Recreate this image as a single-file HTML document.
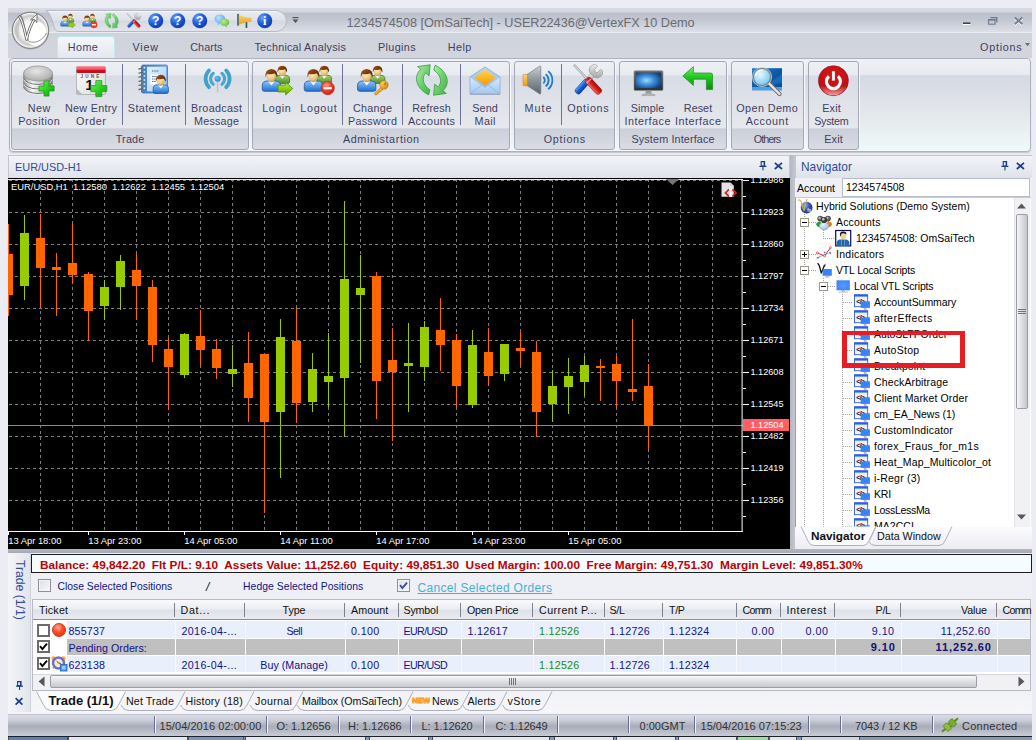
<!DOCTYPE html>
<html>
<head>
<meta charset="utf-8">
<title>VertexFX</title>
<style>
*{box-sizing:border-box;margin:0;padding:0}
html,body{width:1036px;height:740px;overflow:hidden}
body{background:#ececf4;font-family:"Liberation Sans",sans-serif;position:relative;color:#1a1a6a}
.a{position:absolute}
#win{position:absolute;left:0;top:0;width:1036px;height:740px;overflow:hidden}
#title{position:absolute;left:8px;top:8px;width:1024px;height:25px;background:linear-gradient(#d8dbe3 0,#d3d6de 17%,#bac0cb 21%,#c3c7d2 50%,#dddfe7 100%);border-bottom:1px solid #e9ebf0}
#tabs{position:absolute;left:8px;top:33px;width:1024px;height:25px;background:linear-gradient(#cfd3dc,#d2d5de)}
#titletext{position:absolute;left:346.5px;top:14.5px;font-size:12.68px;color:#6b6b72;white-space:nowrap;line-height:16px}
.tab{position:absolute;top:39px;font-size:10.8px;color:#3f3f5f;line-height:16px;white-space:nowrap}
#hometab{position:absolute;left:57px;top:36px;width:58px;height:23px;background:linear-gradient(#f4f6fa,#e4e7ee);border:1px solid #bfe8ee;border-bottom:none;border-radius:4px 4px 0 0}
#ribbon{position:absolute;left:9px;top:58px;width:1022px;height:94px;background:linear-gradient(#eff1f6 0,#e7eaf0 17.5%,#d5d9e3 18%,#dfe2e8 45%,#e8eef0 75%,#effafa 100%);border:1px solid #aeb2be;border-radius:4px;box-shadow:0 1px 1px #c4c7cf}
.grp{position:absolute;top:61px;height:89px;border:1px solid #a4a8b6;border-radius:3px;background:linear-gradient(#eef0f5 0,#e7eaf0 15%,#d8dce5 16%,#e6e8ed 75.5%,#cbcfda 77%,#d9dce4 100%);box-shadow:1px 1px 0 #f8f8fb}
.gcap{position:absolute;left:0;right:0;bottom:2px;text-align:center;font-size:10.8px;color:#3f3f5f;line-height:16px}
.btn{position:absolute;top:102px;text-align:center;font-size:10.8px;line-height:13px;color:#3f3f5f;white-space:nowrap;transform:translateX(-50%)}
.sep{position:absolute;top:64px;width:1px;height:61px;background:#6e7096}
.ico{position:absolute;top:64px;width:32px;height:32px;transform:translateX(-50%)}
.phead{position:absolute;height:24px;background:linear-gradient(#f3f4f8,#dfe2ea);border:1px solid #c3c6d0;font-size:11.4px;color:#2f4a9a;line-height:22px;padding-left:5px;white-space:nowrap}
/* chart */
#chart{position:absolute;left:8px;top:178px;width:782px;height:371px;background:#000;overflow:hidden}
.ct{position:absolute;color:#fff;font-size:9.38px;line-height:11px;white-space:nowrap}
/* navigator */
.tr{position:absolute;font-size:10.5px;line-height:16px;color:#000;white-space:nowrap}
/* bottom */
.bt{position:absolute;font-size:10.7px;line-height:14px;white-space:nowrap;color:#12128a}
.st{position:absolute;top:719px;font-size:11px;line-height:14px;color:#333;white-space:nowrap}
.ssep{position:absolute;top:716px;width:1px;height:17px;background:#6a6c92}
</style>
</head>
<body>
<div id="win">
<div id="title"></div>
<div id="tabs"></div>
<div id="titletext">1234574508 [OmSaiTech] - USER22436@VertexFX 10 Demo</div>
<div id="hometab"></div>
<div class="tab" style="left:67.8px"><span style="letter-spacing:0.397px;margin-right:-0.397px">Home</span></div>
<div class="tab" style="left:132.5px"><span style="letter-spacing:0.762px;margin-right:-0.762px">View</span></div>
<div class="tab" style="left:190.2px"><span style="letter-spacing:0.098px;margin-right:-0.098px">Charts</span></div>
<div class="tab" style="left:254.5px"><span style="letter-spacing:0.215px;margin-right:-0.215px">Technical Analysis</span></div>
<div class="tab" style="left:378.0px"><span style="letter-spacing:0.363px;margin-right:-0.363px">Plugins</span></div>
<div class="tab" style="left:447.8px"><span style="letter-spacing:0.429px;margin-right:-0.429px">Help</span></div>
<div class="tab" style="left:980.1px"><span style="letter-spacing:0.713px;margin-right:-0.713px">Options</span></div>
<div id="ribbon"></div>
<svg class="a" style="left:8px;top:8px" width="300" height="52" viewBox="8 8 300 52"><defs><linearGradient id="qa" x1="0" y1="0" x2="0" y2="1"><stop offset="0" stop-color="#e9ebf1"/><stop offset="0.45" stop-color="#dfe2e9"/><stop offset="0.5" stop-color="#d4d8e0"/><stop offset="1" stop-color="#e2e5eb"/></linearGradient><radialGradient id="ab" cx="0.5" cy="0.5" r="0.5"><stop offset="0" stop-color="#ffffff"/><stop offset="0.55" stop-color="#f2f2f2"/><stop offset="0.8" stop-color="#c9c9c9"/><stop offset="0.93" stop-color="#f4f4f4"/><stop offset="1" stop-color="#9a9a9a"/></radialGradient></defs><path d="M46 10.5 H276 A10.5 10.5 0 0 1 276 31.5 H59 Q55 31.5 53.4 25 Q50.5 12.5 46 10.5 Z" fill="url(#qa)" stroke="#b6bac6" stroke-width="1"/><path d="M48 11.5 H276" stroke="#f4f5f8" stroke-width="1"/><circle cx="30.5" cy="30.8" r="18.8" fill="#8f939e" opacity=".45"/><circle cx="30.5" cy="30.3" r="18.2" fill="url(#ab)" stroke="#777" stroke-width="0.8"/><path d="M14 31 A16.5 16.5 0 0 1 24 15.5 Q17 24 19 38 Q15 36 14 31 Z" fill="#bdbdbd" opacity=".55"/><ellipse cx="36.4" cy="33.7" rx="9.6" ry="12" fill="#fff" transform="rotate(18 36.4 33.7)"/><path d="M21 15 C25 22 24.5 34 29 41.5 C36 44 43 40 46.5 33" fill="none" stroke="#8a8a8a" stroke-width="0.9"/><path d="M19.6 16.8 C22.6 20 24.6 30 26.6 39.4 C28.4 31 31.6 23 35.4 17.6" fill="none" stroke="#5e5e5e" stroke-width="2.7" stroke-linecap="round" stroke-linejoin="round"/><path d="M19.6 16.8 C22.6 20 24.6 30 26.6 39.4 C28.4 31 31.6 23 35.4 17.6" fill="none" stroke="#f8f8f8" stroke-width="1.2" stroke-linecap="round" stroke-linejoin="round"/><path d="M30.6 19.8 L37.2 14 L36.8 22.6 L34.6 19.6 Z" fill="#f0f0f0" stroke="#5e5e5e" stroke-width="0.8" stroke-linejoin="round"/><rect x="292.5" y="17" width="6" height="1.2" fill="#55575f"/><polygon points="292.5,19.5 298.5,19.5 295.5,23" fill="#55575f"/></svg>
<svg class="a" style="left:60.0px;top:13.4px;overflow:visible" width="15.5" height="15.5" viewBox="0 0 32 32"><defs><linearGradient id="qlgb" x1="0" y1="0" x2="0" y2="1"><stop offset="0" stop-color="#a5d36c"/><stop offset="1" stop-color="#4f8f2a"/></linearGradient><radialGradient id="qlgh" cx="0.4" cy="0.35" r="0.8"><stop offset="0" stop-color="#ffedc4"/><stop offset="0.6" stop-color="#eac27f"/><stop offset="1" stop-color="#b98645"/></radialGradient><linearGradient id="qlgr" x1="0" y1="0" x2="1" y2="1"><stop offset="0" stop-color="#a95a1a"/><stop offset="0.55" stop-color="#74350a"/><stop offset="1" stop-color="#4e2205"/></linearGradient><linearGradient id="qlub" x1="0" y1="0" x2="0" y2="1"><stop offset="0" stop-color="#8cc6f7"/><stop offset="1" stop-color="#1f6fd0"/></linearGradient><radialGradient id="qluh" cx="0.4" cy="0.35" r="0.8"><stop offset="0" stop-color="#ffedc4"/><stop offset="0.6" stop-color="#eac27f"/><stop offset="1" stop-color="#b98645"/></radialGradient><linearGradient id="qlur" x1="0" y1="0" x2="1" y2="1"><stop offset="0" stop-color="#a95a1a"/><stop offset="0.55" stop-color="#74350a"/><stop offset="1" stop-color="#4e2205"/></linearGradient></defs><path d="M14.02 14.97 Q14.02 11.27 18.02 11.27 L24.58 11.27 Q28.59 11.27 28.59 14.97 L28.59 17.84 Q28.59 19.49 26.76 19.49 L15.84 19.49 Q14.02 19.49 14.02 17.84 Z" fill="url(#qlgb)" stroke="#3d7a1e" stroke-width="0.8"/><path d="M18.71 11.46 L23.89 11.46 L21.30 14.79 Z" fill="#fff"/><rect x="19.80" y="9.62" width="3.01" height="2.59" fill="#c99a5b"/><ellipse cx="21.30" cy="7.27" rx="3.85" ry="4.46" fill="url(#qlgh)"/><path d="M16.60 8.45 Q15.90 1.86 21.30 1.63 Q26.70 1.86 26.00 8.45 Q25.06 6.33 23.89 5.15 Q20.83 6.56 17.77 5.39 Q17.30 6.80 16.60 8.45 Z" fill="url(#qlgr)"/><path d="M1.25 21.65 Q1.25 17.01 6.28 17.01 L14.52 17.01 Q19.55 17.01 19.55 21.65 L19.55 25.27 Q19.55 27.33 17.26 27.33 L3.54 27.33 Q1.25 27.33 1.25 25.27 Z" fill="url(#qlub)" stroke="#1a55a8" stroke-width="0.8"/><path d="M7.15 17.21 L13.65 17.21 L10.40 21.43 Z" fill="#fff"/><rect x="8.51" y="14.94" width="3.78" height="3.25" fill="#c99a5b"/><ellipse cx="10.40" cy="11.99" rx="4.84" ry="5.61" fill="url(#qluh)"/><path d="M4.50 13.46 Q3.62 5.21 10.40 4.91 Q17.19 5.21 16.30 13.46 Q15.12 10.81 13.65 9.34 Q9.81 11.11 5.97 9.63 Q5.38 11.40 4.50 13.46 Z" fill="url(#qlur)"/><path d="M17 21.2 H24.6 V18.3 L31.8 24.6 L24.6 30.9 V28 H17 Z" fill="#8fcf10" stroke="#5b8e0a" stroke-width="0.8"/></svg>
<svg class="a" style="left:82.0px;top:13.4px;overflow:visible" width="15.5" height="15.5" viewBox="0 0 32 32"><defs><linearGradient id="qogb" x1="0" y1="0" x2="0" y2="1"><stop offset="0" stop-color="#a5d36c"/><stop offset="1" stop-color="#4f8f2a"/></linearGradient><radialGradient id="qogh" cx="0.4" cy="0.35" r="0.8"><stop offset="0" stop-color="#ffedc4"/><stop offset="0.6" stop-color="#eac27f"/><stop offset="1" stop-color="#b98645"/></radialGradient><linearGradient id="qogr" x1="0" y1="0" x2="1" y2="1"><stop offset="0" stop-color="#a95a1a"/><stop offset="0.55" stop-color="#74350a"/><stop offset="1" stop-color="#4e2205"/></linearGradient><linearGradient id="qoub" x1="0" y1="0" x2="0" y2="1"><stop offset="0" stop-color="#8cc6f7"/><stop offset="1" stop-color="#1f6fd0"/></linearGradient><radialGradient id="qouh" cx="0.4" cy="0.35" r="0.8"><stop offset="0" stop-color="#ffedc4"/><stop offset="0.6" stop-color="#eac27f"/><stop offset="1" stop-color="#b98645"/></radialGradient><linearGradient id="qour" x1="0" y1="0" x2="1" y2="1"><stop offset="0" stop-color="#a95a1a"/><stop offset="0.55" stop-color="#74350a"/><stop offset="1" stop-color="#4e2205"/></linearGradient></defs><path d="M14.02 14.97 Q14.02 11.27 18.02 11.27 L24.58 11.27 Q28.59 11.27 28.59 14.97 L28.59 17.84 Q28.59 19.49 26.76 19.49 L15.84 19.49 Q14.02 19.49 14.02 17.84 Z" fill="url(#qogb)" stroke="#3d7a1e" stroke-width="0.8"/><path d="M18.71 11.46 L23.89 11.46 L21.30 14.79 Z" fill="#fff"/><rect x="19.80" y="9.62" width="3.01" height="2.59" fill="#c99a5b"/><ellipse cx="21.30" cy="7.27" rx="3.85" ry="4.46" fill="url(#qogh)"/><path d="M16.60 8.45 Q15.90 1.86 21.30 1.63 Q26.70 1.86 26.00 8.45 Q25.06 6.33 23.89 5.15 Q20.83 6.56 17.77 5.39 Q17.30 6.80 16.60 8.45 Z" fill="url(#qogr)"/><path d="M1.25 21.65 Q1.25 17.01 6.28 17.01 L14.52 17.01 Q19.55 17.01 19.55 21.65 L19.55 25.27 Q19.55 27.33 17.26 27.33 L3.54 27.33 Q1.25 27.33 1.25 25.27 Z" fill="url(#qoub)" stroke="#1a55a8" stroke-width="0.8"/><path d="M7.15 17.21 L13.65 17.21 L10.40 21.43 Z" fill="#fff"/><rect x="8.51" y="14.94" width="3.78" height="3.25" fill="#c99a5b"/><ellipse cx="10.40" cy="11.99" rx="4.84" ry="5.61" fill="url(#qouh)"/><path d="M4.50 13.46 Q3.62 5.21 10.40 4.91 Q17.19 5.21 16.30 13.46 Q15.12 10.81 13.65 9.34 Q9.81 11.11 5.97 9.63 Q5.38 11.40 4.50 13.46 Z" fill="url(#qour)"/><circle cx="24.7" cy="24.1" r="6.8" fill="#ee3b2b" stroke="#b4170e" stroke-width="0.6"/><rect x="20.4" y="22.8" width="8.6" height="2.8" fill="#fff"/></svg>
<svg class="a" style="left:104.2px;top:13.4px;overflow:visible" width="15.5" height="15.5" viewBox="0 0 32.4 32.4"><defs><linearGradient id="qra" x1="0" y1="0" x2="1" y2="1"><stop offset="0" stop-color="#b6ecb0"/><stop offset="0.5" stop-color="#6fd06c"/><stop offset="1" stop-color="#3fae45"/></linearGradient></defs><path d="M13.2 31.2 C3 26 -1.5 13 6.2 5.4 L3.2 2.6 L14.6 0.8 L13.6 12 L10.4 9.2 C6.6 14 8 21.4 14.4 26.2 Z" fill="url(#qra)" stroke="#3da046" stroke-width="0.8" stroke-linejoin="round"/><path d="M19 1.2 C29.2 6.4 33.7 19.4 26 27 L29 29.8 L17.6 31.6 L18.6 20.4 L21.8 23.2 C25.6 18.4 24.2 11 17.8 6.2 Z" fill="url(#qra)" stroke="#3da046" stroke-width="0.8" stroke-linejoin="round"/></svg>
<svg class="a" style="left:126.1px;top:13.4px;overflow:visible" width="15.5" height="15.5" viewBox="0 0 32 32"><defs><linearGradient id="qta" x1="0" y1="0" x2="1" y2="0"><stop offset="0" stop-color="#ff6a6a"/><stop offset="0.5" stop-color="#d91c1c"/><stop offset="1" stop-color="#9c0c0c"/></linearGradient><linearGradient id="qtb" x1="0" y1="0" x2="1" y2="0"><stop offset="0" stop-color="#5aa4ff"/><stop offset="0.5" stop-color="#1560d8"/><stop offset="1" stop-color="#0a3c9c"/></linearGradient><linearGradient id="qtc" x1="0" y1="0" x2="1" y2="1"><stop offset="0" stop-color="#f4f4f4"/><stop offset="1" stop-color="#9a9a9a"/></linearGradient></defs><g transform="rotate(42 16 16)"><rect x="13.6" y="9" width="4.8" height="8" fill="url(#qtc)" stroke="#8a8a8a" stroke-width="0.5"/><path d="M11.2 -0.5 A5.6 5.6 0 0 0 13.4 9.6 L18.6 9.6 A5.6 5.6 0 0 0 20.8 -0.5 L18.2 -0.5 L18.2 4 L16 5.4 L13.8 4 L13.8 -0.5 Z" fill="url(#qtc)" stroke="#8a8a8a" stroke-width="0.5"/><rect x="12.9" y="16" width="6.2" height="17.5" rx="2.6" fill="url(#qtb)" stroke="#0a3c9c" stroke-width="0.5"/></g><g transform="rotate(-43 16 16)"><rect x="15.1" y="-4.5" width="1.9" height="19" fill="#cfcfcf" stroke="#777" stroke-width="0.4"/><rect x="12.6" y="14" width="6.8" height="20" rx="2.8" fill="url(#qta)" stroke="#8c0a0a" stroke-width="0.5"/><rect x="12.8" y="16.5" width="6.4" height="1.6" fill="#f4c0c0" opacity=".7"/></g></svg>
<svg class="a" style="left:147.8px;top:13.4px;overflow:visible" width="15.5" height="15.5" viewBox="0 0 32 32"><defs><radialGradient id="qh1" cx="0.35" cy="0.3" r="0.8"><stop offset="0" stop-color="#6fa4f4"/><stop offset="0.5" stop-color="#1f5cd8"/><stop offset="1" stop-color="#0a36a8"/></radialGradient></defs><circle cx="16" cy="16" r="15.5" fill="url(#qh1)"/><text x="16" y="25" font-family="Liberation Sans" font-weight="bold" font-size="25" text-anchor="middle" fill="#fff">?</text></svg>
<svg class="a" style="left:169.7px;top:13.4px;overflow:visible" width="15.5" height="15.5" viewBox="0 0 32 32"><defs><radialGradient id="qh2" cx="0.35" cy="0.3" r="0.8"><stop offset="0" stop-color="#6fa4f4"/><stop offset="0.5" stop-color="#1f5cd8"/><stop offset="1" stop-color="#0a36a8"/></radialGradient></defs><circle cx="16" cy="16" r="15.5" fill="url(#qh2)"/><text x="16" y="25" font-family="Liberation Sans" font-weight="bold" font-size="25" text-anchor="middle" fill="#fff">?</text></svg>
<svg class="a" style="left:191.8px;top:13.4px;overflow:visible" width="15.5" height="15.5" viewBox="0 0 32 32"><defs><radialGradient id="qh3" cx="0.35" cy="0.3" r="0.8"><stop offset="0" stop-color="#6fa4f4"/><stop offset="0.5" stop-color="#1f5cd8"/><stop offset="1" stop-color="#0a36a8"/></radialGradient></defs><circle cx="16" cy="16" r="15.5" fill="url(#qh3)"/><text x="16" y="25" font-family="Liberation Sans" font-weight="bold" font-size="25" text-anchor="middle" fill="#fff">?</text></svg>
<svg class="a" style="left:213.8px;top:13.4px;overflow:visible" width="15.5" height="15.5" viewBox="0 0 32 32"><defs><radialGradient id="qca" cx="0.4" cy="0.3" r="0.8"><stop offset="0" stop-color="#bfe2ff"/><stop offset="1" stop-color="#3f98e6"/></radialGradient><radialGradient id="qcb" cx="0.4" cy="0.3" r="0.8"><stop offset="0" stop-color="#b6ee8a"/><stop offset="1" stop-color="#4cb828"/></radialGradient></defs><path d="M12 3 C20 3 23 8 23 12 C23 17 18 20.5 12 20.5 L8 26 L8 20 C3 18.5 1 15 1 12 C1 8 4 3 12 3 Z" fill="url(#qca)"/><path d="M22 12 C28 12 31.5 15.5 31.5 19.5 C31.5 22.5 29 25 26 26 L26.5 30 L22.5 26.8 C16 27 12.5 23.5 12.5 19.5 C12.5 15.5 16 12 22 12 Z" fill="url(#qcb)"/></svg>
<svg class="a" style="left:236.8px;top:13.4px;overflow:visible" width="15.5" height="15.5" viewBox="0 0 32 32"><defs><linearGradient id="qha" x1="0" y1="0" x2="0" y2="1"><stop offset="0" stop-color="#fbd86a"/><stop offset="1" stop-color="#e8a020"/></linearGradient></defs><path d="M3 3 L3 25 C10 21 20 19 29 18 C31 16 31 12 29 10 C20 9 10 7 3 3 Z" fill="url(#qha)"/><rect x="0.5" y="1.5" width="3" height="25" rx="1.2" fill="#2a5a5a"/><path d="M19.5 19 V31" stroke="#2a5a5a" stroke-width="3.4"/></svg>
<svg class="a" style="left:257.4px;top:13.4px;overflow:visible" width="15.5" height="15.5" viewBox="0 0 32 32"><defs><radialGradient id="qi" cx="0.35" cy="0.3" r="0.8"><stop offset="0" stop-color="#6fa4f4"/><stop offset="0.5" stop-color="#1f5cd8"/><stop offset="1" stop-color="#0a36a8"/></radialGradient></defs><circle cx="16" cy="16" r="15.5" fill="url(#qi)"/><text x="16" y="25" font-family="Liberation Serif" font-weight="bold" font-size="25" text-anchor="middle" fill="#fff">i</text></svg>
<svg class="a" style="left:955px;top:12px" width="75" height="18" viewBox="955 12 75 18"><rect x="963" y="23.6" width="7.4" height="1.4" fill="#fff"/><rect x="963" y="22.4" width="7.4" height="1.6" fill="#3c4256"/><path d="M990.5 17.6 H996.8 V22.4" fill="none" stroke="#6e7a92" stroke-width="1.3"/><rect x="988.6" y="19.6" width="6.4" height="4.6" fill="none" stroke="#6e7a92" stroke-width="1.1"/><rect x="988.2" y="19.1" width="7.2" height="1.5" fill="#6e7a92"/><path d="M1014.8 17.6 L1022.4 24.2 M1022.4 17.6 L1014.8 24.2" stroke="#fff" stroke-width="2.2" transform="translate(0 0.9)"/><path d="M1014.8 17.6 L1022.4 24.2 M1022.4 17.6 L1014.8 24.2" stroke="#76839b" stroke-width="2"/></svg>
<svg class="a" style="left:1025px;top:43px" width="6" height="4"><polygon points="0,0 5,0 2.5,3.2" fill="#6a6c7a"/></svg>
<div class="grp" style="left:11px;width:238px"><div class="gcap"><span style="letter-spacing:0.172px;margin-right:-0.172px">Trade</span></div></div>
<div class="grp" style="left:252px;width:258px"><div class="gcap"><span style="letter-spacing:0.598px;margin-right:-0.598px">Administartion</span></div></div>
<div class="grp" style="left:514px;width:101px"><div class="gcap"><span style="letter-spacing:0.713px;margin-right:-0.713px">Options</span></div></div>
<div class="grp" style="left:619px;width:108px"><div class="gcap"><span style="letter-spacing:0.138px;margin-right:-0.138px">System Interface</span></div></div>
<div class="grp" style="left:731px;width:73px"><div class="gcap"><span style="letter-spacing:-1.022px;margin-right:1.022px">Others</span></div></div>
<div class="grp" style="left:808px;width:51px"><div class="gcap"><span style="letter-spacing:0.165px;margin-right:-0.165px">Exit</span></div></div>
<div class="btn" style="left:39px"><span style="letter-spacing:0.547px;margin-right:-0.547px">New</span><br><span style="letter-spacing:0.454px;margin-right:-0.454px">Position</span></div>
<div class="ico" style="left:39px"><svg width="32" height="32" viewBox="0 0 32 32" style="display:block;overflow:visible"><defs><linearGradient id="npa" x1="0" y1="0" x2="1" y2="0"><stop offset="0" stop-color="#8e8e8e"/><stop offset="0.3" stop-color="#f4f4f4"/><stop offset="0.7" stop-color="#c4c4c4"/><stop offset="1" stop-color="#7c7c7c"/></linearGradient><radialGradient id="npb" cx="0.45" cy="0.35" r="0.7"><stop offset="0" stop-color="#e6e6e6"/><stop offset="1" stop-color="#a9a9a9"/></radialGradient><linearGradient id="npp" x1="0" y1="0" x2="1" y2="1"><stop offset="0" stop-color="#7df06a"/><stop offset="0.5" stop-color="#2ed321"/><stop offset="1" stop-color="#12981a"/></linearGradient></defs><path d="M0.5 9.5 L0.5 23 A14.5 7 0 0 0 29.5 23 L29.5 9.5 Z" fill="url(#npa)" stroke="#8a8a8a" stroke-width="0.6"/><path d="M0.8 14.5 A14.3 6.8 0 0 0 29.2 14.5" fill="none" stroke="#6e6e6e" stroke-width="1"/><path d="M0.8 15.5 A14.3 6.8 0 0 0 29.2 15.5" fill="none" stroke="#fff" stroke-width="0.8" opacity=".8"/><path d="M0.8 19 A14.3 6.8 0 0 0 29.2 19" fill="none" stroke="#6e6e6e" stroke-width="1"/><path d="M0.8 20 A14.3 6.8 0 0 0 29.2 20" fill="none" stroke="#fff" stroke-width="0.8" opacity=".8"/><path d="M0.8 23.5 A14.3 6.8 0 0 0 29.2 23.5" fill="none" stroke="#6e6e6e" stroke-width="1"/><path d="M0.8 24.5 A14.3 6.8 0 0 0 29.2 24.5" fill="none" stroke="#fff" stroke-width="0.8" opacity=".8"/><ellipse cx="15" cy="9.5" rx="14.5" ry="7.6" fill="url(#npb)" stroke="#8e8e8e" stroke-width="0.7"/><polygon points="21.00,16.90 26.00,16.90 26.00,22.00 31.10,22.00 31.10,27.00 26.00,27.00 26.00,32.10 21.00,32.10 21.00,27.00 15.90,27.00 15.90,22.00 21.00,22.00" fill="url(#npp)" stroke="#1e8f1e" stroke-width="0.7"/></svg></div>
<div class="btn" style="left:91px"><span style="letter-spacing:0.261px;margin-right:-0.261px">New Entry</span><br><span style="letter-spacing:0.548px;margin-right:-0.548px">Order</span></div>
<div class="ico" style="left:91px"><svg width="32" height="32" viewBox="0 0 32 32" style="display:block;overflow:visible"><defs><linearGradient id="nea" x1="0" y1="0" x2="0" y2="1"><stop offset="0" stop-color="#ff8a98"/><stop offset="0.5" stop-color="#f0455a"/><stop offset="0.55" stop-color="#d0101e"/><stop offset="1" stop-color="#c40a18"/></linearGradient><linearGradient id="neb" x1="0" y1="0" x2="1" y2="1"><stop offset="0" stop-color="#ffffff"/><stop offset="1" stop-color="#d9d9d9"/></linearGradient><linearGradient id="nep" x1="0" y1="0" x2="1" y2="1"><stop offset="0" stop-color="#7df06a"/><stop offset="0.5" stop-color="#2ed321"/><stop offset="1" stop-color="#12981a"/></linearGradient></defs><rect x="1.5" y="2.5" width="29" height="28" rx="1.5" fill="url(#neb)" stroke="#a8a8a8" stroke-width="0.8"/><rect x="1.5" y="2.2" width="29" height="6.8" rx="1" fill="url(#nea)"/><text x="16" y="14.2" font-family="Liberation Sans" font-weight="bold" font-size="4.6" text-anchor="middle" fill="#555" letter-spacing="2.2">JUNE</text><text x="14.5" y="26" font-family="Liberation Sans" font-weight="bold" font-size="15" text-anchor="middle" fill="#111">1</text><path d="M2 25 L7 30 L2 30 Z" fill="#bbb"/><polygon points="20.80,16.60 26.80,16.60 26.80,21.60 31.80,21.60 31.80,27.60 26.80,27.60 26.80,32.60 20.80,32.60 20.80,27.60 15.80,27.60 15.80,21.60 20.80,21.60" fill="url(#nep)" stroke="#1e8f1e" stroke-width="0.7"/></svg></div>
<div class="btn" style="left:154px"><span style="letter-spacing:0.384px;margin-right:-0.384px">Statement</span></div>
<div class="ico" style="left:154px"><svg width="32" height="32" viewBox="0 0 32 32" style="display:block;overflow:visible"><defs><linearGradient id="sta" x1="0" y1="0" x2="1" y2="0"><stop offset="0" stop-color="#3f7fc4"/><stop offset="1" stop-color="#7db4ea"/></linearGradient><linearGradient id="stb" x1="0" y1="0" x2="1" y2="1"><stop offset="0" stop-color="#e4f1ff"/><stop offset="1" stop-color="#a9cdf4"/></linearGradient><linearGradient id="stub" x1="0" y1="0" x2="0" y2="1"><stop offset="0" stop-color="#8cc6f7"/><stop offset="1" stop-color="#1f6fd0"/></linearGradient><radialGradient id="stuh" cx="0.4" cy="0.35" r="0.8"><stop offset="0" stop-color="#ffedc4"/><stop offset="0.6" stop-color="#eac27f"/><stop offset="1" stop-color="#b98645"/></radialGradient><linearGradient id="stur" x1="0" y1="0" x2="1" y2="1"><stop offset="0" stop-color="#a95a1a"/><stop offset="0.55" stop-color="#74350a"/><stop offset="1" stop-color="#4e2205"/></linearGradient></defs><rect x="3.5" y="1" width="26" height="28" rx="1.5" fill="url(#sta)" stroke="#2f68a8" stroke-width="0.7"/><rect x="9" y="2.8" width="19" height="24.5" fill="url(#stb)"/><rect x="12.5" y="10.5" width="9" height="10" fill="#fff"/><path d="M14 7h7M14 12.5h5M14 15h4M14 17.5h4" stroke="#3a5a8a" stroke-width="0.9" stroke-dasharray="1.5 0.7"/><path d="M1 5.0 L6 3.7" stroke="#6a6a6a" stroke-width="1.3" stroke-linecap="round"/><circle cx="6.3" cy="3.7" r="0.9" fill="#dfefff"/><path d="M1 9.1 L6 7.8" stroke="#6a6a6a" stroke-width="1.3" stroke-linecap="round"/><circle cx="6.3" cy="7.8" r="0.9" fill="#dfefff"/><path d="M1 13.2 L6 11.9" stroke="#6a6a6a" stroke-width="1.3" stroke-linecap="round"/><circle cx="6.3" cy="11.9" r="0.9" fill="#dfefff"/><path d="M1 17.3 L6 16.0" stroke="#6a6a6a" stroke-width="1.3" stroke-linecap="round"/><circle cx="6.3" cy="16.0" r="0.9" fill="#dfefff"/><path d="M1 21.4 L6 20.1" stroke="#6a6a6a" stroke-width="1.3" stroke-linecap="round"/><circle cx="6.3" cy="20.1" r="0.9" fill="#dfefff"/><path d="M1 25.5 L6 24.2" stroke="#6a6a6a" stroke-width="1.3" stroke-linecap="round"/><circle cx="6.3" cy="24.2" r="0.9" fill="#dfefff"/><path d="M15.21 24.71 Q15.21 20.86 19.38 20.86 L26.22 20.86 Q30.40 20.86 30.40 24.71 L30.40 27.72 Q30.40 29.43 28.50 29.43 L17.10 29.43 Q15.21 29.43 15.21 27.72 Z" fill="url(#stub)" stroke="#1a55a8" stroke-width="0.8"/><path d="M20.11 21.05 L25.50 21.05 L22.80 24.53 Z" fill="#fff"/><rect x="21.23" y="19.14" width="3.14" height="2.70" fill="#c99a5b"/><ellipse cx="22.80" cy="16.69" rx="4.02" ry="4.66" fill="url(#stuh)"/><path d="M17.90 17.91 Q17.16 11.05 22.80 10.81 Q28.44 11.05 27.70 17.91 Q26.72 15.71 25.50 14.48 Q22.31 15.96 19.12 14.73 Q18.64 16.20 17.90 17.91 Z" fill="url(#stur)"/></svg></div>
<div class="btn" style="left:216.5px"><span style="letter-spacing:0.309px;margin-right:-0.309px">Broadcast</span><br><span style="letter-spacing:0.163px;margin-right:-0.163px">Message</span></div>
<div class="ico" style="left:216.5px"><svg width="32" height="32" viewBox="0 0 32 32" style="display:block;overflow:visible"><defs><radialGradient id="bca" cx="0.4" cy="0.35" r="0.7"><stop offset="0" stop-color="#6cc6f5"/><stop offset="1" stop-color="#1f88cf"/></radialGradient></defs><path d="M16.6 16.8 V28.5" stroke="#c4c4c4" stroke-width="1.6"/><path d="M20.91 9.28 A7.00 7.00 0 0 1 20.91 20.32" fill="none" stroke="#4aa6cc" stroke-width="3" stroke-linecap="round"/><path d="M12.29 20.32 A7.00 7.00 0 0 1 12.29 9.28" fill="none" stroke="#4aa6cc" stroke-width="3" stroke-linecap="round"/><path d="M25.23 6.46 A12.00 12.00 0 0 1 25.23 23.14" fill="none" stroke="#43a0c6" stroke-width="3.8" stroke-linecap="round"/><path d="M7.97 23.14 A12.00 12.00 0 0 1 7.97 6.46" fill="none" stroke="#43a0c6" stroke-width="3.8" stroke-linecap="round"/><circle cx="16.6" cy="14.8" r="3" fill="url(#bca)"/></svg></div>
<div class="btn" style="left:276.5px"><span style="letter-spacing:0.519px;margin-right:-0.519px">Login</span></div>
<div class="ico" style="left:276.5px"><svg width="32" height="32" viewBox="0 0 32 32" style="display:block;overflow:visible"><defs><linearGradient id="lggb" x1="0" y1="0" x2="0" y2="1"><stop offset="0" stop-color="#a5d36c"/><stop offset="1" stop-color="#4f8f2a"/></linearGradient><radialGradient id="lggh" cx="0.4" cy="0.35" r="0.8"><stop offset="0" stop-color="#ffedc4"/><stop offset="0.6" stop-color="#eac27f"/><stop offset="1" stop-color="#b98645"/></radialGradient><linearGradient id="lggr" x1="0" y1="0" x2="1" y2="1"><stop offset="0" stop-color="#a95a1a"/><stop offset="0.55" stop-color="#74350a"/><stop offset="1" stop-color="#4e2205"/></linearGradient><linearGradient id="lgub" x1="0" y1="0" x2="0" y2="1"><stop offset="0" stop-color="#8cc6f7"/><stop offset="1" stop-color="#1f6fd0"/></linearGradient><radialGradient id="lguh" cx="0.4" cy="0.35" r="0.8"><stop offset="0" stop-color="#ffedc4"/><stop offset="0.6" stop-color="#eac27f"/><stop offset="1" stop-color="#b98645"/></radialGradient><linearGradient id="lgur" x1="0" y1="0" x2="1" y2="1"><stop offset="0" stop-color="#a95a1a"/><stop offset="0.55" stop-color="#74350a"/><stop offset="1" stop-color="#4e2205"/></linearGradient><linearGradient id="lga" x1="0" y1="0" x2="0" y2="1"><stop offset="0" stop-color="#c4ee4a"/><stop offset="0.5" stop-color="#8fcf10"/><stop offset="1" stop-color="#5e9a06"/></linearGradient></defs><path d="M14.02 14.97 Q14.02 11.27 18.02 11.27 L24.58 11.27 Q28.59 11.27 28.59 14.97 L28.59 17.84 Q28.59 19.49 26.76 19.49 L15.84 19.49 Q14.02 19.49 14.02 17.84 Z" fill="url(#lggb)" stroke="#3d7a1e" stroke-width="0.8"/><path d="M18.71 11.46 L23.89 11.46 L21.30 14.79 Z" fill="#fff"/><rect x="19.80" y="9.62" width="3.01" height="2.59" fill="#c99a5b"/><ellipse cx="21.30" cy="7.27" rx="3.85" ry="4.46" fill="url(#lggh)"/><path d="M16.60 8.45 Q15.90 1.86 21.30 1.63 Q26.70 1.86 26.00 8.45 Q25.06 6.33 23.89 5.15 Q20.83 6.56 17.77 5.39 Q17.30 6.80 16.60 8.45 Z" fill="url(#lggr)"/><path d="M1.25 21.65 Q1.25 17.01 6.28 17.01 L14.52 17.01 Q19.55 17.01 19.55 21.65 L19.55 25.27 Q19.55 27.33 17.26 27.33 L3.54 27.33 Q1.25 27.33 1.25 25.27 Z" fill="url(#lgub)" stroke="#1a55a8" stroke-width="0.8"/><path d="M7.15 17.21 L13.65 17.21 L10.40 21.43 Z" fill="#fff"/><rect x="8.51" y="14.94" width="3.78" height="3.25" fill="#c99a5b"/><ellipse cx="10.40" cy="11.99" rx="4.84" ry="5.61" fill="url(#lguh)"/><path d="M4.50 13.46 Q3.62 5.21 10.40 4.91 Q17.19 5.21 16.30 13.46 Q15.12 10.81 13.65 9.34 Q9.81 11.11 5.97 9.63 Q5.38 11.40 4.50 13.46 Z" fill="url(#lgur)"/><path d="M17 21.2 H24.6 V18.3 L31.8 24.6 L24.6 30.9 V28 H17 Z" fill="url(#lga)" stroke="#5b8e0a" stroke-width="0.8"/></svg></div>
<div class="btn" style="left:318.5px"><span style="letter-spacing:0.693px;margin-right:-0.693px">Logout</span></div>
<div class="ico" style="left:318.5px"><svg width="32" height="32" viewBox="0 0 32 32" style="display:block;overflow:visible"><defs><linearGradient id="logb" x1="0" y1="0" x2="0" y2="1"><stop offset="0" stop-color="#a5d36c"/><stop offset="1" stop-color="#4f8f2a"/></linearGradient><radialGradient id="logh" cx="0.4" cy="0.35" r="0.8"><stop offset="0" stop-color="#ffedc4"/><stop offset="0.6" stop-color="#eac27f"/><stop offset="1" stop-color="#b98645"/></radialGradient><linearGradient id="logr" x1="0" y1="0" x2="1" y2="1"><stop offset="0" stop-color="#a95a1a"/><stop offset="0.55" stop-color="#74350a"/><stop offset="1" stop-color="#4e2205"/></linearGradient><linearGradient id="loub" x1="0" y1="0" x2="0" y2="1"><stop offset="0" stop-color="#8cc6f7"/><stop offset="1" stop-color="#1f6fd0"/></linearGradient><radialGradient id="louh" cx="0.4" cy="0.35" r="0.8"><stop offset="0" stop-color="#ffedc4"/><stop offset="0.6" stop-color="#eac27f"/><stop offset="1" stop-color="#b98645"/></radialGradient><linearGradient id="lour" x1="0" y1="0" x2="1" y2="1"><stop offset="0" stop-color="#a95a1a"/><stop offset="0.55" stop-color="#74350a"/><stop offset="1" stop-color="#4e2205"/></linearGradient><radialGradient id="loa" cx="0.4" cy="0.3" r="0.8"><stop offset="0" stop-color="#ff9a8a"/><stop offset="0.5" stop-color="#ee3b2b"/><stop offset="1" stop-color="#c41a10"/></radialGradient></defs><path d="M14.02 14.97 Q14.02 11.27 18.02 11.27 L24.58 11.27 Q28.59 11.27 28.59 14.97 L28.59 17.84 Q28.59 19.49 26.76 19.49 L15.84 19.49 Q14.02 19.49 14.02 17.84 Z" fill="url(#logb)" stroke="#3d7a1e" stroke-width="0.8"/><path d="M18.71 11.46 L23.89 11.46 L21.30 14.79 Z" fill="#fff"/><rect x="19.80" y="9.62" width="3.01" height="2.59" fill="#c99a5b"/><ellipse cx="21.30" cy="7.27" rx="3.85" ry="4.46" fill="url(#logh)"/><path d="M16.60 8.45 Q15.90 1.86 21.30 1.63 Q26.70 1.86 26.00 8.45 Q25.06 6.33 23.89 5.15 Q20.83 6.56 17.77 5.39 Q17.30 6.80 16.60 8.45 Z" fill="url(#logr)"/><path d="M1.25 21.65 Q1.25 17.01 6.28 17.01 L14.52 17.01 Q19.55 17.01 19.55 21.65 L19.55 25.27 Q19.55 27.33 17.26 27.33 L3.54 27.33 Q1.25 27.33 1.25 25.27 Z" fill="url(#loub)" stroke="#1a55a8" stroke-width="0.8"/><path d="M7.15 17.21 L13.65 17.21 L10.40 21.43 Z" fill="#fff"/><rect x="8.51" y="14.94" width="3.78" height="3.25" fill="#c99a5b"/><ellipse cx="10.40" cy="11.99" rx="4.84" ry="5.61" fill="url(#louh)"/><path d="M4.50 13.46 Q3.62 5.21 10.40 4.91 Q17.19 5.21 16.30 13.46 Q15.12 10.81 13.65 9.34 Q9.81 11.11 5.97 9.63 Q5.38 11.40 4.50 13.46 Z" fill="url(#lour)"/><circle cx="24.7" cy="24.1" r="6.6" fill="url(#loa)" stroke="#b4170e" stroke-width="0.6"/><rect x="20.6" y="23" width="8.2" height="2.3" fill="#fff"/></svg></div>
<div class="btn" style="left:372.5px"><span style="letter-spacing:0.234px;margin-right:-0.234px">Change</span><br><span style="letter-spacing:0.197px;margin-right:-0.197px">Password</span></div>
<div class="ico" style="left:372.5px"><svg width="32" height="32" viewBox="0 0 32 32" style="display:block;overflow:visible"><defs><linearGradient id="cpgb" x1="0" y1="0" x2="0" y2="1"><stop offset="0" stop-color="#a5d36c"/><stop offset="1" stop-color="#4f8f2a"/></linearGradient><radialGradient id="cpgh" cx="0.4" cy="0.35" r="0.8"><stop offset="0" stop-color="#ffedc4"/><stop offset="0.6" stop-color="#eac27f"/><stop offset="1" stop-color="#b98645"/></radialGradient><linearGradient id="cpgr" x1="0" y1="0" x2="1" y2="1"><stop offset="0" stop-color="#a95a1a"/><stop offset="0.55" stop-color="#74350a"/><stop offset="1" stop-color="#4e2205"/></linearGradient><linearGradient id="cpub" x1="0" y1="0" x2="0" y2="1"><stop offset="0" stop-color="#8cc6f7"/><stop offset="1" stop-color="#1f6fd0"/></linearGradient><radialGradient id="cpuh" cx="0.4" cy="0.35" r="0.8"><stop offset="0" stop-color="#ffedc4"/><stop offset="0.6" stop-color="#eac27f"/><stop offset="1" stop-color="#b98645"/></radialGradient><linearGradient id="cpur" x1="0" y1="0" x2="1" y2="1"><stop offset="0" stop-color="#a95a1a"/><stop offset="0.55" stop-color="#74350a"/><stop offset="1" stop-color="#4e2205"/></linearGradient><linearGradient id="cpa" x1="0" y1="0" x2="1" y2="1"><stop offset="0" stop-color="#ffe08a"/><stop offset="0.5" stop-color="#f5aa2a"/><stop offset="1" stop-color="#c77a08"/></linearGradient></defs><path d="M13.32 14.97 Q13.32 11.27 17.32 11.27 L23.88 11.27 Q27.89 11.27 27.89 14.97 L27.89 17.84 Q27.89 19.49 26.06 19.49 L15.14 19.49 Q13.32 19.49 13.32 17.84 Z" fill="url(#cpgb)" stroke="#3d7a1e" stroke-width="0.8"/><path d="M18.02 11.46 L23.19 11.46 L20.60 14.79 Z" fill="#fff"/><rect x="19.10" y="9.62" width="3.01" height="2.59" fill="#c99a5b"/><ellipse cx="20.60" cy="7.27" rx="3.85" ry="4.46" fill="url(#cpgh)"/><path d="M15.90 8.45 Q15.20 1.86 20.60 1.63 Q26.01 1.86 25.30 8.45 Q24.36 6.33 23.19 5.15 Q20.13 6.56 17.08 5.39 Q16.61 6.80 15.90 8.45 Z" fill="url(#cpgr)"/><path d="M0.55 21.65 Q0.55 17.01 5.58 17.01 L13.82 17.01 Q18.84 17.01 18.84 21.65 L18.84 25.27 Q18.84 27.33 16.56 27.33 L2.84 27.33 Q0.55 27.33 0.55 25.27 Z" fill="url(#cpub)" stroke="#1a55a8" stroke-width="0.8"/><path d="M6.45 17.21 L12.95 17.21 L9.70 21.43 Z" fill="#fff"/><rect x="7.81" y="14.94" width="3.78" height="3.25" fill="#c99a5b"/><ellipse cx="9.70" cy="11.99" rx="4.84" ry="5.61" fill="url(#cpuh)"/><path d="M3.80 13.46 Q2.91 5.21 9.70 4.91 Q16.48 5.21 15.60 13.46 Q14.42 10.81 12.95 9.34 Q9.11 11.11 5.27 9.63 Q4.68 11.40 3.80 13.46 Z" fill="url(#cpur)"/><path d="M24.2 23.2 L17.5 29.2 L18 30.8 L20.3 30.6 L20.6 29 L22.2 28.9 L22.4 27.4 L24 27.2 L26 25.3 Z" fill="url(#cpa)" stroke="#b8740a" stroke-width="0.6"/><circle cx="27" cy="21" r="4.2" fill="url(#cpa)" stroke="#b8740a" stroke-width="0.6"/><circle cx="28.3" cy="19.7" r="1.2" fill="#7a9a3a"/></svg></div>
<div class="btn" style="left:431.5px"><span style="letter-spacing:0.131px;margin-right:-0.131px">Refresh</span><br><span style="letter-spacing:0.354px;margin-right:-0.354px">Accounts</span></div>
<div class="ico" style="left:431.5px"><svg width="32" height="32" viewBox="0 0 32.4 32.4" style="display:block;overflow:visible"><defs><linearGradient id="rfa" x1="0" y1="0" x2="1" y2="1"><stop offset="0" stop-color="#b6ecb0"/><stop offset="0.5" stop-color="#6fd06c"/><stop offset="1" stop-color="#3fae45"/></linearGradient></defs><g transform="translate(16.2 0) scale(1.13 1) translate(-16.2 0)"><path d="M13.2 31.2 C3 26 -1.5 13 6.2 5.4 L3.2 2.6 L14.6 0.8 L13.6 12 L10.4 9.2 C6.6 14 8 21.4 14.4 26.2 Z" fill="url(#rfa)" stroke="#3da046" stroke-width="0.8" stroke-linejoin="round"/><path d="M19 1.2 C29.2 6.4 33.7 19.4 26 27 L29 29.8 L17.6 31.6 L18.6 20.4 L21.8 23.2 C25.6 18.4 24.2 11 17.8 6.2 Z" fill="url(#rfa)" stroke="#3da046" stroke-width="0.8" stroke-linejoin="round"/></g></svg></div>
<div class="btn" style="left:485px"><span style="letter-spacing:0.092px;margin-right:-0.092px">Send</span><br><span style="letter-spacing:0.399px;margin-right:-0.399px">Mail</span></div>
<div class="ico" style="left:485px"><svg width="32" height="32" viewBox="0 0 32 32" style="display:block;overflow:visible"><defs><linearGradient id="ma" x1="0" y1="0" x2="0" y2="1"><stop offset="0" stop-color="#ffd54a"/><stop offset="1" stop-color="#f39a00"/></linearGradient><linearGradient id="mb" x1="0" y1="0" x2="0" y2="1"><stop offset="0" stop-color="#b9d8f7"/><stop offset="1" stop-color="#86b4e6"/></linearGradient><linearGradient id="mc" x1="0" y1="0" x2="0" y2="1"><stop offset="0" stop-color="#d6e9fc"/><stop offset="1" stop-color="#a4c8f0"/></linearGradient></defs><path d="M1 13 L16 3 L31 13 L31 30 L1 30 Z" fill="url(#mb)" stroke="#7ea6d6" stroke-width="0.8" stroke-linejoin="round"/><path d="M5 13.5 L16 5.6 L27 13.5 L16 21.5 Z" fill="url(#ma)"/><path d="M1.4 13.6 L16 24 L30.6 13.6 L30.6 29.6 L1.4 29.6 Z" fill="url(#mc)"/><path d="M1.4 29.6 L12.5 21.3 M30.6 29.6 L19.5 21.3" stroke="#8db4e2" stroke-width="0.8" fill="none"/><path d="M1 30.5 H31" stroke="#9aa4b4" stroke-width="0.8"/></svg></div>
<div class="btn" style="left:538px"><span style="letter-spacing:0.930px;margin-right:-0.930px">Mute</span></div>
<div class="ico" style="left:538px"><svg width="32" height="32" viewBox="0 0 32 32" style="display:block;overflow:visible"><defs><linearGradient id="mua" x1="0" y1="0" x2="0" y2="1"><stop offset="0" stop-color="#c9ced4"/><stop offset="0.5" stop-color="#8c949c"/><stop offset="1" stop-color="#5c646c"/></linearGradient><linearGradient id="mub" x1="0" y1="0" x2="0" y2="1"><stop offset="0" stop-color="#ffd56a"/><stop offset="1" stop-color="#f59a10"/></linearGradient></defs><path d="M5 10.6 L17.5 2.2 Q18.8 1.6 18.8 3 L18.8 29 Q18.8 30.4 17.5 29.8 L5 21.6 Z" fill="url(#mua)" stroke="#6a727a" stroke-width="0.6"/><rect x="1" y="10.4" width="4.4" height="11.4" rx="0.8" fill="url(#mub)" stroke="#d98a10" stroke-width="0.6"/><path d="M21.30 12.98 A4.20 4.20 0 0 1 21.30 19.42" fill="none" stroke="#1d78d2" stroke-width="1.8"/><path d="M23.74 10.07 A8.00 8.00 0 0 1 23.74 22.33" fill="none" stroke="#1d78d2" stroke-width="1.8"/><path d="M26.18 7.16 A11.80 11.80 0 0 1 26.18 25.24" fill="none" stroke="#1d78d2" stroke-width="1.8"/></svg></div>
<div class="btn" style="left:588px"><span style="letter-spacing:0.713px;margin-right:-0.713px">Options</span></div>
<div class="ico" style="left:588px"><svg width="32" height="32" viewBox="0 0 32 32" style="display:block;overflow:visible"><defs><linearGradient id="opa" x1="0" y1="0" x2="1" y2="0"><stop offset="0" stop-color="#ff6a6a"/><stop offset="0.5" stop-color="#d91c1c"/><stop offset="1" stop-color="#9c0c0c"/></linearGradient><linearGradient id="opb" x1="0" y1="0" x2="1" y2="0"><stop offset="0" stop-color="#5aa4ff"/><stop offset="0.5" stop-color="#1560d8"/><stop offset="1" stop-color="#0a3c9c"/></linearGradient><linearGradient id="opc" x1="0" y1="0" x2="1" y2="1"><stop offset="0" stop-color="#f4f4f4"/><stop offset="1" stop-color="#9a9a9a"/></linearGradient></defs><g transform="rotate(42 16 16)"><rect x="13.6" y="9" width="4.8" height="8" fill="url(#opc)" stroke="#8a8a8a" stroke-width="0.5"/><path d="M11.2 -0.5 A5.6 5.6 0 0 0 13.4 9.6 L18.6 9.6 A5.6 5.6 0 0 0 20.8 -0.5 L18.2 -0.5 L18.2 4 L16 5.4 L13.8 4 L13.8 -0.5 Z" fill="url(#opc)" stroke="#8a8a8a" stroke-width="0.5"/><rect x="12.9" y="16" width="6.2" height="17.5" rx="2.6" fill="url(#opb)" stroke="#0a3c9c" stroke-width="0.5"/></g><g transform="rotate(-43 16 16)"><rect x="15.1" y="-4.5" width="1.9" height="19" fill="#cfcfcf" stroke="#777" stroke-width="0.4"/><rect x="12.6" y="14" width="6.8" height="20" rx="2.8" fill="url(#opa)" stroke="#8c0a0a" stroke-width="0.5"/><rect x="12.8" y="16.5" width="6.4" height="1.6" fill="#f4c0c0" opacity=".7"/></g></svg></div>
<div class="btn" style="left:647.5px"><span style="letter-spacing:0.098px;margin-right:-0.098px">Simple</span><br><span style="letter-spacing:0.509px;margin-right:-0.509px">Interface</span></div>
<div class="ico" style="left:647.5px"><svg width="32" height="32" viewBox="0 0 32 32" style="display:block;overflow:visible"><defs><radialGradient id="sia" cx="0.42" cy="0.5" r="0.65"><stop offset="0" stop-color="#9fd8ff"/><stop offset="0.45" stop-color="#3d8fdc"/><stop offset="1" stop-color="#12386e"/></radialGradient><linearGradient id="sib" x1="0" y1="0" x2="0" y2="1"><stop offset="0" stop-color="#6a6a6a"/><stop offset="1" stop-color="#2c2c2c"/></linearGradient></defs><rect x="2" y="6.8" width="29" height="19.6" rx="1.2" fill="url(#sib)" stroke="#8a8a8a" stroke-width="0.6"/><rect x="3.8" y="8.6" width="25.4" height="15.6" fill="url(#sia)"/><path d="M14 26.4 H19 L19.8 29.4 H13.2 Z" fill="#9a9a9a"/><path d="M10 30.8 Q16.5 28.2 23 30.8 L23 31.6 H10 Z" fill="#b4b4b4" stroke="#8a8a8a" stroke-width="0.4"/></svg></div>
<div class="btn" style="left:698px"><span style="letter-spacing:0.022px;margin-right:-0.022px">Reset</span><br><span style="letter-spacing:0.509px;margin-right:-0.509px">Interface</span></div>
<div class="ico" style="left:698px"><svg width="32" height="32" viewBox="0 0 32 32" style="display:block;overflow:visible"><defs><linearGradient id="rsa" x1="0" y1="0" x2="0" y2="1"><stop offset="0" stop-color="#7af06a"/><stop offset="0.45" stop-color="#22c822"/><stop offset="1" stop-color="#0a8a12"/></linearGradient></defs><path d="M0.8 12 L11.4 2.6 L11.4 9 L28.6 9 Q30.6 9 30.6 11 L30.6 25.6 L24.4 25.6 L24.4 15.2 L11.4 15.2 L11.4 21.4 Z" fill="url(#rsa)" stroke="#18901c" stroke-width="0.7" stroke-linejoin="round"/></svg></div>
<div class="btn" style="left:767px"><span style="letter-spacing:0.409px;margin-right:-0.409px">Open Demo</span><br><span style="letter-spacing:0.546px;margin-right:-0.546px">Account</span></div>
<div class="ico" style="left:767px"><svg width="32" height="32" viewBox="0 0 32 32" style="display:block;overflow:visible"><defs><linearGradient id="oda" x1="0" y1="0" x2="1" y2="1"><stop offset="0" stop-color="#1f86d8"/><stop offset="0.5" stop-color="#0a5aa8"/><stop offset="1" stop-color="#0a4a92"/></linearGradient><radialGradient id="odb" cx="0.4" cy="0.35" r="0.75"><stop offset="0" stop-color="#e6f8ff"/><stop offset="0.6" stop-color="#9ad8f4"/><stop offset="1" stop-color="#58b4e4"/></radialGradient><linearGradient id="odc" x1="0" y1="0" x2="1" y2="0"><stop offset="0" stop-color="#f4f4f4"/><stop offset="1" stop-color="#8a8a8a"/></linearGradient></defs><rect x="1" y="4.2" width="30" height="22" fill="url(#oda)"/><path d="M31 4.2 L31 19 L12 23 L31 10 Z" fill="#2a7ccc" opacity=".5"/><rect x="1" y="23" width="30" height="3.2" fill="#4aa2e6"/><path d="M18.2 19.6 L28.6 30" stroke="#6a6a6a" stroke-width="4.2" stroke-linecap="round"/><path d="M18.2 19.6 L28.6 30" stroke="#e4e4e4" stroke-width="2.4" stroke-linecap="round"/><circle cx="11" cy="13" r="8.8" fill="url(#odb)" stroke="#7a8088" stroke-width="1.6"/><circle cx="11" cy="13" r="9.6" fill="none" stroke="#d8dce0" stroke-width="0.7"/><path d="M4.8 11 A6.6 6.6 0 0 1 11 6.2" stroke="#fff" stroke-width="1.6" fill="none" stroke-linecap="round"/></svg></div>
<div class="btn" style="left:831.5px"><span style="letter-spacing:0.165px;margin-right:-0.165px">Exit</span><br><span style="letter-spacing:-0.261px;margin-right:0.261px">System</span></div>
<div class="ico" style="left:831.5px"><svg width="32" height="32" viewBox="0 0 32 32" style="display:block;overflow:visible"><defs><radialGradient id="exa" cx="0.5" cy="0.3" r="0.75"><stop offset="0" stop-color="#d81818"/><stop offset="0.7" stop-color="#c01010"/><stop offset="1" stop-color="#8c0808"/></radialGradient><linearGradient id="exb" x1="0" y1="0" x2="0" y2="1"><stop offset="0" stop-color="#ff9a9a" stop-opacity="0"/><stop offset="1" stop-color="#ffb0b0" stop-opacity=".9"/></linearGradient></defs><circle cx="17.4" cy="16.7" r="15" fill="url(#exa)" stroke="#7a1a3a" stroke-width="0.6"/><path d="M3.6 21 A14.4 14.4 0 0 0 31.2 21 Q17.4 27.5 3.6 21 Z" fill="url(#exb)"/><path d="M21.90 12.24 A7.0 7.0 0 1 1 12.90 12.24" fill="none" stroke="#fff" stroke-width="3.1" stroke-linecap="butt"/><path d="M17.4 7.2 V16.6" stroke="#fff" stroke-width="2.9" stroke-linecap="butt"/></svg></div>
<div class="sep" style="left:122px"></div>
<div class="sep" style="left:185px"></div>
<div class="sep" style="left:342px"></div>
<div class="sep" style="left:402px"></div>
<div class="sep" style="left:460px"></div>
<div class="sep" style="left:561px"></div>
<div class="phead" style="left:8px;top:155px;width:782px;font-size:10.9px;padding-left:6px">EUR/USD-H1</div>
<div id="chart">
<svg class="a" style="left:0;top:0" width="782" height="371" viewBox="8 178 782 371" shape-rendering="crispEdges">
<line x1="40.5" y1="179" x2="40.5" y2="531" stroke="#7c7c7c" stroke-width="1" stroke-dasharray="3 3"/>
<line x1="72.5" y1="179" x2="72.5" y2="531" stroke="#7c7c7c" stroke-width="1" stroke-dasharray="3 3"/>
<line x1="104.5" y1="179" x2="104.5" y2="531" stroke="#7c7c7c" stroke-width="1" stroke-dasharray="3 3"/>
<line x1="136.5" y1="179" x2="136.5" y2="531" stroke="#7c7c7c" stroke-width="1" stroke-dasharray="3 3"/>
<line x1="168.5" y1="179" x2="168.5" y2="531" stroke="#7c7c7c" stroke-width="1" stroke-dasharray="3 3"/>
<line x1="200.5" y1="179" x2="200.5" y2="531" stroke="#7c7c7c" stroke-width="1" stroke-dasharray="3 3"/>
<line x1="232.5" y1="179" x2="232.5" y2="531" stroke="#7c7c7c" stroke-width="1" stroke-dasharray="3 3"/>
<line x1="264.5" y1="179" x2="264.5" y2="531" stroke="#7c7c7c" stroke-width="1" stroke-dasharray="3 3"/>
<line x1="296.5" y1="179" x2="296.5" y2="531" stroke="#7c7c7c" stroke-width="1" stroke-dasharray="3 3"/>
<line x1="328.5" y1="179" x2="328.5" y2="531" stroke="#7c7c7c" stroke-width="1" stroke-dasharray="3 3"/>
<line x1="360.5" y1="179" x2="360.5" y2="531" stroke="#7c7c7c" stroke-width="1" stroke-dasharray="3 3"/>
<line x1="392.5" y1="179" x2="392.5" y2="531" stroke="#7c7c7c" stroke-width="1" stroke-dasharray="3 3"/>
<line x1="424.5" y1="179" x2="424.5" y2="531" stroke="#7c7c7c" stroke-width="1" stroke-dasharray="3 3"/>
<line x1="456.5" y1="179" x2="456.5" y2="531" stroke="#7c7c7c" stroke-width="1" stroke-dasharray="3 3"/>
<line x1="488.5" y1="179" x2="488.5" y2="531" stroke="#7c7c7c" stroke-width="1" stroke-dasharray="3 3"/>
<line x1="520.5" y1="179" x2="520.5" y2="531" stroke="#7c7c7c" stroke-width="1" stroke-dasharray="3 3"/>
<line x1="552.5" y1="179" x2="552.5" y2="531" stroke="#7c7c7c" stroke-width="1" stroke-dasharray="3 3"/>
<line x1="584.5" y1="179" x2="584.5" y2="531" stroke="#7c7c7c" stroke-width="1" stroke-dasharray="3 3"/>
<line x1="616.5" y1="179" x2="616.5" y2="531" stroke="#7c7c7c" stroke-width="1" stroke-dasharray="3 3"/>
<line x1="648.5" y1="179" x2="648.5" y2="531" stroke="#7c7c7c" stroke-width="1" stroke-dasharray="3 3"/>
<line x1="680.5" y1="179" x2="680.5" y2="531" stroke="#7c7c7c" stroke-width="1" stroke-dasharray="3 3"/>
<line x1="712.5" y1="179" x2="712.5" y2="531" stroke="#7c7c7c" stroke-width="1" stroke-dasharray="3 3"/>
<line x1="9" y1="180.5" x2="742" y2="180.5" stroke="#7c7c7c" stroke-width="1" stroke-dasharray="3 3"/>
<line x1="9" y1="212.5" x2="742" y2="212.5" stroke="#7c7c7c" stroke-width="1" stroke-dasharray="3 3"/>
<line x1="9" y1="244.5" x2="742" y2="244.5" stroke="#7c7c7c" stroke-width="1" stroke-dasharray="3 3"/>
<line x1="9" y1="276.5" x2="742" y2="276.5" stroke="#7c7c7c" stroke-width="1" stroke-dasharray="3 3"/>
<line x1="9" y1="308.5" x2="742" y2="308.5" stroke="#7c7c7c" stroke-width="1" stroke-dasharray="3 3"/>
<line x1="9" y1="340.5" x2="742" y2="340.5" stroke="#7c7c7c" stroke-width="1" stroke-dasharray="3 3"/>
<line x1="9" y1="372.5" x2="742" y2="372.5" stroke="#7c7c7c" stroke-width="1" stroke-dasharray="3 3"/>
<line x1="9" y1="404.5" x2="742" y2="404.5" stroke="#7c7c7c" stroke-width="1" stroke-dasharray="3 3"/>
<line x1="9" y1="436.5" x2="742" y2="436.5" stroke="#7c7c7c" stroke-width="1" stroke-dasharray="3 3"/>
<line x1="9" y1="468.5" x2="742" y2="468.5" stroke="#7c7c7c" stroke-width="1" stroke-dasharray="3 3"/>
<line x1="9" y1="500.5" x2="742" y2="500.5" stroke="#7c7c7c" stroke-width="1" stroke-dasharray="3 3"/>
<rect x="8" y="224" width="1" height="92" fill="#ff6600"/>
<rect x="4" y="254" width="9" height="41" fill="#ff6600"/>
<rect x="24" y="215" width="1" height="85" fill="#99cc00"/>
<rect x="20" y="233" width="9" height="53" fill="#99cc00"/>
<rect x="40" y="214" width="1" height="94" fill="#ff6600"/>
<rect x="36" y="238" width="9" height="30" fill="#ff6600"/>
<rect x="56" y="253" width="1" height="63" fill="#ff6600"/>
<rect x="52" y="267" width="9" height="3" fill="#ff6600"/>
<rect x="72" y="223" width="1" height="60" fill="#ff6600"/>
<rect x="68" y="263" width="9" height="12" fill="#ff6600"/>
<rect x="88" y="272" width="1" height="69" fill="#ff6600"/>
<rect x="84" y="274" width="9" height="37" fill="#ff6600"/>
<rect x="104" y="280" width="1" height="40" fill="#99cc00"/>
<rect x="100" y="287" width="9" height="19" fill="#99cc00"/>
<rect x="120" y="255" width="1" height="55" fill="#99cc00"/>
<rect x="116" y="261" width="9" height="26" fill="#99cc00"/>
<rect x="136" y="254" width="1" height="66" fill="#ff6600"/>
<rect x="132" y="270" width="9" height="16" fill="#ff6600"/>
<rect x="152" y="280" width="1" height="82" fill="#ff6600"/>
<rect x="148" y="287" width="9" height="58" fill="#ff6600"/>
<rect x="168" y="338" width="1" height="72" fill="#ff6600"/>
<rect x="164" y="349" width="9" height="18" fill="#ff6600"/>
<rect x="184" y="333" width="1" height="45" fill="#99cc00"/>
<rect x="180" y="334" width="9" height="41" fill="#99cc00"/>
<rect x="200" y="310" width="1" height="56" fill="#ff6600"/>
<rect x="196" y="336" width="9" height="14" fill="#ff6600"/>
<rect x="216" y="339" width="1" height="40" fill="#ff6600"/>
<rect x="212" y="349" width="9" height="19" fill="#ff6600"/>
<rect x="232" y="345" width="1" height="42" fill="#99cc00"/>
<rect x="228" y="369" width="9" height="5" fill="#99cc00"/>
<rect x="248" y="332" width="1" height="90" fill="#ff6600"/>
<rect x="244" y="363" width="9" height="35" fill="#ff6600"/>
<rect x="264" y="354" width="1" height="159" fill="#ff6600"/>
<rect x="260" y="354" width="9" height="68" fill="#ff6600"/>
<rect x="280" y="319" width="1" height="159" fill="#99cc00"/>
<rect x="276" y="337" width="9" height="75" fill="#99cc00"/>
<rect x="296" y="307" width="1" height="116" fill="#ff6600"/>
<rect x="292" y="341" width="9" height="62" fill="#ff6600"/>
<rect x="312" y="353" width="1" height="59" fill="#99cc00"/>
<rect x="308" y="369" width="9" height="33" fill="#99cc00"/>
<rect x="328" y="333" width="1" height="74" fill="#99cc00"/>
<rect x="324" y="376" width="9" height="6" fill="#99cc00"/>
<rect x="344" y="201" width="1" height="236" fill="#99cc00"/>
<rect x="340" y="279" width="9" height="99" fill="#99cc00"/>
<rect x="360" y="255" width="1" height="108" fill="#99cc00"/>
<rect x="356" y="288" width="9" height="7" fill="#99cc00"/>
<rect x="376" y="272" width="1" height="147" fill="#ff6600"/>
<rect x="372" y="276" width="9" height="105" fill="#ff6600"/>
<rect x="392" y="328" width="1" height="113" fill="#ff6600"/>
<rect x="388" y="360" width="9" height="12" fill="#ff6600"/>
<rect x="408" y="323" width="1" height="89" fill="#99cc00"/>
<rect x="404" y="363" width="9" height="3" fill="#99cc00"/>
<rect x="424" y="321" width="1" height="60" fill="#99cc00"/>
<rect x="420" y="327" width="9" height="40" fill="#99cc00"/>
<rect x="440" y="298" width="1" height="73" fill="#ff6600"/>
<rect x="436" y="330" width="9" height="15" fill="#ff6600"/>
<rect x="456" y="334" width="1" height="73" fill="#ff6600"/>
<rect x="452" y="340" width="9" height="46" fill="#ff6600"/>
<rect x="472" y="330" width="1" height="78" fill="#99cc00"/>
<rect x="468" y="345" width="9" height="60" fill="#99cc00"/>
<rect x="488" y="328" width="1" height="58" fill="#ff6600"/>
<rect x="484" y="352" width="9" height="24" fill="#ff6600"/>
<rect x="504" y="344" width="1" height="37" fill="#99cc00"/>
<rect x="500" y="344" width="9" height="30" fill="#99cc00"/>
<rect x="520" y="332" width="1" height="34" fill="#ff6600"/>
<rect x="516" y="348" width="9" height="3" fill="#ff6600"/>
<rect x="536" y="341" width="1" height="96" fill="#ff6600"/>
<rect x="532" y="352" width="9" height="60" fill="#ff6600"/>
<rect x="552" y="370" width="1" height="52" fill="#99cc00"/>
<rect x="548" y="386" width="9" height="18" fill="#99cc00"/>
<rect x="568" y="358" width="1" height="56" fill="#99cc00"/>
<rect x="564" y="376" width="9" height="11" fill="#99cc00"/>
<rect x="584" y="356" width="1" height="40" fill="#99cc00"/>
<rect x="580" y="365" width="9" height="17" fill="#99cc00"/>
<rect x="600" y="359" width="1" height="42" fill="#ff6600"/>
<rect x="596" y="366" width="9" height="2" fill="#ff6600"/>
<rect x="616" y="356" width="1" height="52" fill="#ff6600"/>
<rect x="612" y="364" width="9" height="17" fill="#ff6600"/>
<rect x="632" y="319" width="1" height="82" fill="#ff6600"/>
<rect x="628" y="389" width="9" height="3" fill="#ff6600"/>
<rect x="648" y="364" width="1" height="86" fill="#ff6600"/>
<rect x="644" y="386" width="9" height="40" fill="#ff6600"/>
<rect x="8" y="179" width="735" height="1" fill="#e6e6e6"/>
<rect x="8" y="425" width="735" height="1" fill="#ff5a5a"/>
<rect x="741.6" y="179" width="1" height="353" fill="#fff" shape-rendering="auto"/>
<rect x="8" y="531" width="735" height="1" fill="#fff"/>
<rect x="743" y="180" width="6" height="1" fill="#fff"/>
<rect x="743" y="196" width="3" height="1" fill="#fff"/>
<rect x="743" y="212" width="6" height="1" fill="#fff"/>
<rect x="743" y="228" width="3" height="1" fill="#fff"/>
<rect x="743" y="244" width="6" height="1" fill="#fff"/>
<rect x="743" y="260" width="3" height="1" fill="#fff"/>
<rect x="743" y="276" width="6" height="1" fill="#fff"/>
<rect x="743" y="292" width="3" height="1" fill="#fff"/>
<rect x="743" y="308" width="6" height="1" fill="#fff"/>
<rect x="743" y="324" width="3" height="1" fill="#fff"/>
<rect x="743" y="340" width="6" height="1" fill="#fff"/>
<rect x="743" y="356" width="3" height="1" fill="#fff"/>
<rect x="743" y="372" width="6" height="1" fill="#fff"/>
<rect x="743" y="388" width="3" height="1" fill="#fff"/>
<rect x="743" y="404" width="6" height="1" fill="#fff"/>
<rect x="743" y="420" width="3" height="1" fill="#fff"/>
<rect x="743" y="436" width="6" height="1" fill="#fff"/>
<rect x="743" y="452" width="3" height="1" fill="#fff"/>
<rect x="743" y="468" width="6" height="1" fill="#fff"/>
<rect x="743" y="484" width="3" height="1" fill="#fff"/>
<rect x="743" y="500" width="6" height="1" fill="#fff"/>
<rect x="743" y="516" width="3" height="1" fill="#fff"/>
<rect x="8" y="532" width="1" height="3" fill="#fff"/>
<rect x="88" y="532" width="1" height="3" fill="#fff"/>
<rect x="184" y="532" width="1" height="3" fill="#fff"/>
<rect x="280" y="532" width="1" height="3" fill="#fff"/>
<rect x="376" y="532" width="1" height="3" fill="#fff"/>
<rect x="472" y="532" width="1" height="3" fill="#fff"/>
<rect x="568" y="532" width="1" height="3" fill="#fff"/>
<rect x="743" y="419" width="46" height="12" fill="#ff5f64"/>
<polygon points="666,179 679,179 672.5,185" fill="#777" shape-rendering="auto"/>
</svg>
<div class="ct" style="left:3px;top:3.5px;">EUR/USD,H1&nbsp; 1.12580&nbsp; 1.12622&nbsp; 1.12455&nbsp; 1.12504</div>
<div class="ct" style="left:742.5px;top:-3px;font-size:9.15px">1.12986</div>
<div class="ct" style="left:742.5px;top:29px;font-size:9.15px">1.12923</div>
<div class="ct" style="left:742.5px;top:61px;font-size:9.15px">1.12860</div>
<div class="ct" style="left:742.5px;top:93px;font-size:9.15px">1.12797</div>
<div class="ct" style="left:742.5px;top:125px;font-size:9.15px">1.12734</div>
<div class="ct" style="left:742.5px;top:157px;font-size:9.15px">1.12671</div>
<div class="ct" style="left:742.5px;top:189px;font-size:9.15px">1.12608</div>
<div class="ct" style="left:742.5px;top:221px;font-size:9.15px">1.12545</div>
<div class="ct" style="left:742.5px;top:253px;font-size:9.15px">1.12482</div>
<div class="ct" style="left:742.5px;top:285px;font-size:9.15px">1.12419</div>
<div class="ct" style="left:742.5px;top:317px;font-size:9.15px">1.12356</div>
<div class="ct" style="left:742.5px;top:242px;font-size:9.15px">1.12504</div>
<div class="ct" style="left:0.1999999999999993px;top:357.5px;">13 Apr 18:00</div>
<div class="ct" style="left:80.2px;top:357.5px;">13 Apr 23:00</div>
<div class="ct" style="left:176.2px;top:357.5px;">14 Apr 05:00</div>
<div class="ct" style="left:272.2px;top:357.5px;">14 Apr 11:00</div>
<div class="ct" style="left:368.2px;top:357.5px;">14 Apr 17:00</div>
<div class="ct" style="left:464.2px;top:357.5px;">14 Apr 23:00</div>
<div class="ct" style="left:560.2px;top:357.5px;">15 Apr 05:00</div>
<svg class="a" style="left:713px;top:4px" width="17" height="16" viewBox="721 182 17 16"><path d="M721.5 182.5 H730.4 L733.8 185.9 V196.7 H721.5 Z" fill="#e4e4e4"/><path d="M730.4 182.5 V185.9 H733.8 Z" fill="#9c9c9c"/><path d="M730.4 182.5 L733.8 185.9 L730.4 185.9 Z" fill="#fafafa" opacity=".6"/><path d="M729 189.4 L725.4 192.9 L729 196.4 M732.4 189.4 L736 192.9 L732.4 196.4" fill="none" stroke="#e31c1c" stroke-width="1.7"/><rect x="729.6" y="188.6" width="2.2" height="8.4" fill="#fff"/></svg>

</div>
<div class="a" style="left:790px;top:155px;width:5px;height:394px;background:linear-gradient(90deg,#b4b7c1,#c4c7d0)"></div>
<div class="phead" style="left:795px;top:155px;width:241px;border-right:none;font-size:11.9px">Navigator</div>
<svg class="a" style="left:759px;top:160.5px" width="8" height="10" viewBox="0 0 8 10"><path d="M2.2 0.6 H5.6 V5 H2.2 Z" fill="none" stroke="#1c3c90" stroke-width="1.1"/><rect x="4.6" y="0.6" width="1.1" height="4.6" fill="#1c3c90"/><rect x="0.4" y="4.8" width="7" height="1.2" fill="#1c3c90"/><rect x="3.4" y="5.8" width="1.1" height="3.6" fill="#1c3c90"/></svg><svg class="a" style="left:773.5px;top:161.5px" width="9" height="8" viewBox="0 0 9 8"><path d="M0.8 0.8 L8 7 M8 0.8 L0.8 7" stroke="#1c3c90" stroke-width="1.7"/></svg><svg class="a" style="left:1000.5px;top:160.5px" width="8" height="10" viewBox="0 0 8 10"><path d="M2.2 0.6 H5.6 V5 H2.2 Z" fill="none" stroke="#1c3c90" stroke-width="1.1"/><rect x="4.6" y="0.6" width="1.1" height="4.6" fill="#1c3c90"/><rect x="0.4" y="4.8" width="7" height="1.2" fill="#1c3c90"/><rect x="3.4" y="5.8" width="1.1" height="3.6" fill="#1c3c90"/></svg><svg class="a" style="left:1015.5px;top:161.5px" width="9" height="8" viewBox="0 0 9 8"><path d="M0.8 0.8 L8 7 M8 0.8 L0.8 7" stroke="#1c3c90" stroke-width="1.7"/></svg>

<div class="a" style="left:795px;top:178px;width:241px;height:19px;background:#eef0f5"></div>
<div class="a" style="left:797px;top:181px;font-size:10.5px;line-height:14px;color:#000">Account</div>
<div class="a" style="left:842px;top:178px;width:188px;height:19px;background:#fff;border:1px solid #b9bcc8;font-size:10.5px;line-height:17px;color:#000;padding-left:3px">1234574508</div>
<div class="a" id="tree" style="left:795px;top:197px;width:236px;height:330px;background:#fff;border-left:1px solid #9a9cab;border-top:1px solid #c8cad4;overflow:hidden">
<svg class="a" style="left:0;top:0" width="236" height="330" viewBox="796 198 236 330" shape-rendering="crispEdges">
<line x1="804.5" y1="214" x2="804.5" y2="530" stroke="#a0a0a0" stroke-width="1" stroke-dasharray="1 1"/>
<line x1="809" y1="222.5" x2="816" y2="222.5" stroke="#a0a0a0" stroke-width="1" stroke-dasharray="1 1"/>
<line x1="809" y1="254.5" x2="816" y2="254.5" stroke="#a0a0a0" stroke-width="1" stroke-dasharray="1 1"/>
<line x1="809" y1="270.5" x2="816" y2="270.5" stroke="#a0a0a0" stroke-width="1" stroke-dasharray="1 1"/>
<line x1="823.5" y1="230" x2="823.5" y2="238" stroke="#a0a0a0" stroke-width="1" stroke-dasharray="1 1"/>
<line x1="823" y1="238.5" x2="834" y2="238.5" stroke="#a0a0a0" stroke-width="1" stroke-dasharray="1 1"/>
<line x1="823.5" y1="278" x2="823.5" y2="530" stroke="#a0a0a0" stroke-width="1" stroke-dasharray="1 1"/>
<line x1="828" y1="286.5" x2="836" y2="286.5" stroke="#a0a0a0" stroke-width="1" stroke-dasharray="1 1"/>
<line x1="842.5" y1="294" x2="842.5" y2="530" stroke="#a0a0a0" stroke-width="1" stroke-dasharray="1 1"/>
<line x1="843" y1="302.5" x2="853" y2="302.5" stroke="#a0a0a0" stroke-width="1" stroke-dasharray="1 1"/>
<line x1="843" y1="318.5" x2="853" y2="318.5" stroke="#a0a0a0" stroke-width="1" stroke-dasharray="1 1"/>
<line x1="843" y1="334.5" x2="853" y2="334.5" stroke="#a0a0a0" stroke-width="1" stroke-dasharray="1 1"/>
<line x1="843" y1="350.5" x2="853" y2="350.5" stroke="#a0a0a0" stroke-width="1" stroke-dasharray="1 1"/>
<line x1="843" y1="366.5" x2="853" y2="366.5" stroke="#a0a0a0" stroke-width="1" stroke-dasharray="1 1"/>
<line x1="843" y1="382.5" x2="853" y2="382.5" stroke="#a0a0a0" stroke-width="1" stroke-dasharray="1 1"/>
<line x1="843" y1="398.5" x2="853" y2="398.5" stroke="#a0a0a0" stroke-width="1" stroke-dasharray="1 1"/>
<line x1="843" y1="414.5" x2="853" y2="414.5" stroke="#a0a0a0" stroke-width="1" stroke-dasharray="1 1"/>
<line x1="843" y1="430.5" x2="853" y2="430.5" stroke="#a0a0a0" stroke-width="1" stroke-dasharray="1 1"/>
<line x1="843" y1="446.5" x2="853" y2="446.5" stroke="#a0a0a0" stroke-width="1" stroke-dasharray="1 1"/>
<line x1="843" y1="462.5" x2="853" y2="462.5" stroke="#a0a0a0" stroke-width="1" stroke-dasharray="1 1"/>
<line x1="843" y1="478.5" x2="853" y2="478.5" stroke="#a0a0a0" stroke-width="1" stroke-dasharray="1 1"/>
<line x1="843" y1="494.5" x2="853" y2="494.5" stroke="#a0a0a0" stroke-width="1" stroke-dasharray="1 1"/>
<line x1="843" y1="510.5" x2="853" y2="510.5" stroke="#a0a0a0" stroke-width="1" stroke-dasharray="1 1"/>
<line x1="843" y1="526.5" x2="853" y2="526.5" stroke="#a0a0a0" stroke-width="1" stroke-dasharray="1 1"/>
<rect x="800.5" y="218.5" width="8" height="8" fill="#fff" stroke="#9a988c"/><rect x="802" y="222" width="5" height="1" fill="#000"/>
<rect x="800.5" y="250.5" width="8" height="8" fill="#fff" stroke="#9a988c"/><rect x="802" y="254" width="5" height="1" fill="#000"/><rect x="804" y="252" width="1" height="5" fill="#000"/>
<rect x="800.5" y="266.5" width="8" height="8" fill="#fff" stroke="#9a988c"/><rect x="802" y="270" width="5" height="1" fill="#000"/>
<rect x="819.5" y="282.5" width="8" height="8" fill="#fff" stroke="#9a988c"/><rect x="821" y="286" width="5" height="1" fill="#000"/>
</svg>
<div class="a" style="left:2px;top:0px;width:16px;height:16px"><svg width="16" height="16" viewBox="0 0 16 16" style="display:block;overflow:visible"><defs><radialGradient id="tga" cx="0.35" cy="0.3" r="0.8"><stop offset="0" stop-color="#9ab4ea"/><stop offset="0.5" stop-color="#2f55b4"/><stop offset="1" stop-color="#14307a"/></radialGradient></defs><circle cx="8.6" cy="9.7" r="5.9" fill="url(#tga)"/><path d="M0 2.4 C1.5 1 2.6 2.4 3.4 4.6 L6 12.8 L8.9 1.2" fill="none" stroke="#d8a840" stroke-width="1.1" stroke-linejoin="round"/><text x="9.2" y="13.6" font-size="4.5" font-family="Liberation Sans" font-weight="bold" fill="#dfe8ff">fx</text></svg></div>
<div class="tr" style="left:20px;top:0px;letter-spacing:0.048px">Hybrid Solutions (Demo System)</div>
<div class="a" style="left:20px;top:16px;width:16px;height:16px"><svg width="16" height="16" viewBox="0 0 16 16" style="display:block;overflow:visible"><defs><radialGradient id="tab" cx="0.4" cy="0.3" r="0.8"><stop offset="0" stop-color="#e8f4ff"/><stop offset="1" stop-color="#8ab4d8"/></radialGradient></defs><path d="M0 10.5 Q0.5 7.5 4.5 7.5 L6.5 12.5 L2 13 Z" fill="#2f9a2f"/><path d="M16.2 10.5 Q15.7 7.5 11.7 7.5 L9.7 12.5 L14.2 13 Z" fill="#f07818"/><circle cx="4.2" cy="4.6" r="2.9" fill="#555"/><circle cx="12" cy="4.6" r="2.9" fill="#555"/><circle cx="3.6" cy="4" r="1.2" fill="#bbb"/><circle cx="11.4" cy="4" r="1.2" fill="#bbb"/><ellipse cx="8.1" cy="12.2" rx="4.8" ry="3.8" fill="url(#tab)" stroke="#7a9ab8" stroke-width="0.4"/><circle cx="8.1" cy="6" r="3.1" fill="#3c3c3c"/><circle cx="7.3" cy="5.2" r="1.3" fill="#c4c4c4"/></svg></div>
<div class="tr" style="left:40px;top:16px;letter-spacing:0.173px">Accounts</div>
<div class="a" style="left:39px;top:32px;width:16px;height:16px"><svg width="16" height="16" viewBox="0 0 16 16" style="display:block;overflow:visible"><defs></defs><rect x="0.7" y="0.5" width="15" height="15.4" fill="#fff" stroke="#0c0c5c" stroke-width="1.2"/><path d="M1.6 15.4 L1.6 12.4 Q2 10 5.5 9.6 L10.5 9.6 Q14 10 14.4 12.4 L14.4 15.4 Z" fill="#1c6cb0"/><path d="M7 9.8 L7 15.4 M9 9.8 L9 15.4" stroke="#fff" stroke-width="0.6"/><rect x="7.3" y="9.6" width="1.4" height="5.8" fill="#0c4a8a"/><ellipse cx="8.3" cy="5.8" rx="2.9" ry="3.6" fill="#f4cfa0"/><path d="M5 6 Q4.2 1.2 8.2 1.4 Q11.8 1.4 11.4 4.6 Q9.4 2.8 6.6 3.6 Q5.8 4.6 5.6 6.4 Z" fill="#141414"/></svg></div>
<div class="tr" style="left:60px;top:32px;letter-spacing:0.010px">1234574508: OmSaiTech</div>
<div class="a" style="left:20px;top:48px;width:16px;height:16px"><svg width="16" height="16" viewBox="0 0 16 16" style="display:block;overflow:visible"><defs></defs><path d="M0.6 12 L15 6.2" stroke="#3a6ad8" stroke-width="0.9" stroke-dasharray="1.6 1"/><path d="M1 11.8 l1 -1 l1 1 l-1 1 Z M7.6 6.4 l1 -1 l1 1 l-1 1 Z M13.4 7 l1 -1 l1 1 l-1 1 Z" fill="#3a6ad8"/><path d="M1.2 7 L8.6 9.8 L14.6 1.4" fill="none" stroke="#ee2a2a" stroke-width="1"/><circle cx="1.4" cy="7" r="1.1" fill="#fff" stroke="#ee2a2a" stroke-width="0.7"/><circle cx="8.6" cy="9.8" r="1.1" fill="#fff" stroke="#ee2a2a" stroke-width="0.7"/><circle cx="14.4" cy="1.6" r="0.9" fill="#fff" stroke="#ee2a2a" stroke-width="0.7"/></svg></div>
<div class="tr" style="left:40px;top:48px;letter-spacing:0.286px">Indicators</div>
<div class="a" style="left:20px;top:64px;width:16px;height:16px"><svg width="16" height="16" viewBox="0 0 16 16" style="display:block;overflow:visible"><defs></defs><path d="M1.4 1.4 Q2.8 1.8 3.4 4 L5.3 11 L8.4 3.4" fill="none" stroke="#111" stroke-width="1.3" stroke-linejoin="round"/><path d="M7.6 3.8 L9.4 1.4 L9.3 4.6 Z" fill="#111"/><rect x="6.6" y="7" width="9.2" height="6.8" fill="#3b82f6"/><rect x="9.8" y="13.8" width="3" height="1.2" fill="#b4b4b4"/><rect x="8.6" y="14.8" width="5.4" height="0.8" fill="#c4c4c4"/></svg></div>
<div class="tr" style="left:40px;top:64px;letter-spacing:-0.162px">VTL Local Scripts</div>
<div class="a" style="left:40px;top:80px;width:16px;height:16px"><svg width="16" height="16" viewBox="0 0 16 16" style="display:block;overflow:visible"><defs><radialGradient id="tmo" cx="0.5" cy="0.5" r="0.6"><stop offset="0" stop-color="#5a9afa"/><stop offset="1" stop-color="#3b82f6"/></radialGradient></defs><rect x="0.5" y="2.3" width="13.3" height="10" fill="url(#tmo)"/><rect x="5.6" y="12.3" width="3.2" height="1.5" fill="#aaa"/><rect x="2.4" y="13.6" width="9.6" height="1" fill="#c0c0c0"/></svg></div>
<div class="tr" style="left:58px;top:80px;letter-spacing:-0.143px">Local VTL Scripts</div>
<div class="a" style="left:58px;top:96px;width:16px;height:16px"><svg width="16" height="16" viewBox="0 0 16 16" style="display:block;overflow:visible"><defs></defs><rect x="0.5" y="0.9" width="13.2" height="11.8" fill="#f1f1f1" stroke="#2f5fdc" stroke-width="0.9"/><rect x="0.2" y="0.4" width="13.8" height="2.2" fill="#2f5fdc"/><text x="6.6" y="9.6" font-family="Liberation Sans" font-weight="bold" font-size="7" text-anchor="middle" fill="#111" letter-spacing="-0.4">&lt;/&gt;</text><rect x="6.7" y="7.3" width="9.2" height="6.6" fill="#3b82f6"/><rect x="9.8" y="13.9" width="2.6" height="2.1" fill="#b8b8b8"/></svg></div>
<div class="tr" style="left:78px;top:96px;letter-spacing:-0.043px">AccountSummary</div>
<div class="a" style="left:58px;top:112px;width:16px;height:16px"><svg width="16" height="16" viewBox="0 0 16 16" style="display:block;overflow:visible"><defs></defs><rect x="0.5" y="0.9" width="13.2" height="11.8" fill="#f1f1f1" stroke="#2f5fdc" stroke-width="0.9"/><rect x="0.2" y="0.4" width="13.8" height="2.2" fill="#2f5fdc"/><text x="6.6" y="9.6" font-family="Liberation Sans" font-weight="bold" font-size="7" text-anchor="middle" fill="#111" letter-spacing="-0.4">&lt;/&gt;</text><rect x="6.7" y="7.3" width="9.2" height="6.6" fill="#3b82f6"/><rect x="9.8" y="13.9" width="2.6" height="2.1" fill="#b8b8b8"/></svg></div>
<div class="tr" style="left:78px;top:112px;letter-spacing:0.480px">afterEffects</div>
<div class="a" style="left:58px;top:128px;width:16px;height:16px"><svg width="16" height="16" viewBox="0 0 16 16" style="display:block;overflow:visible"><defs></defs><rect x="0.5" y="0.9" width="13.2" height="11.8" fill="#f1f1f1" stroke="#2f5fdc" stroke-width="0.9"/><rect x="0.2" y="0.4" width="13.8" height="2.2" fill="#2f5fdc"/><text x="6.6" y="9.6" font-family="Liberation Sans" font-weight="bold" font-size="7" text-anchor="middle" fill="#111" letter-spacing="-0.4">&lt;/&gt;</text><rect x="6.7" y="7.3" width="9.2" height="6.6" fill="#3b82f6"/><rect x="9.8" y="13.9" width="2.6" height="2.1" fill="#b8b8b8"/></svg></div>
<div class="tr" style="left:78px;top:128px;letter-spacing:-0.060px">AutoSLTPOrder</div>
<div class="a" style="left:58px;top:144px;width:16px;height:16px"><svg width="16" height="16" viewBox="0 0 16 16" style="display:block;overflow:visible"><defs></defs><rect x="0.5" y="0.9" width="13.2" height="11.8" fill="#f1f1f1" stroke="#2f5fdc" stroke-width="0.9"/><rect x="0.2" y="0.4" width="13.8" height="2.2" fill="#2f5fdc"/><text x="6.6" y="9.6" font-family="Liberation Sans" font-weight="bold" font-size="7" text-anchor="middle" fill="#111" letter-spacing="-0.4">&lt;/&gt;</text><rect x="6.7" y="7.3" width="9.2" height="6.6" fill="#3b82f6"/><rect x="9.8" y="13.9" width="2.6" height="2.1" fill="#b8b8b8"/></svg></div>
<div class="tr" style="left:78px;top:144px;letter-spacing:0.271px">AutoStop</div>
<div class="a" style="left:58px;top:160px;width:16px;height:16px"><svg width="16" height="16" viewBox="0 0 16 16" style="display:block;overflow:visible"><defs></defs><rect x="0.5" y="0.9" width="13.2" height="11.8" fill="#f1f1f1" stroke="#2f5fdc" stroke-width="0.9"/><rect x="0.2" y="0.4" width="13.8" height="2.2" fill="#2f5fdc"/><text x="6.6" y="9.6" font-family="Liberation Sans" font-weight="bold" font-size="7" text-anchor="middle" fill="#111" letter-spacing="-0.4">&lt;/&gt;</text><rect x="6.7" y="7.3" width="9.2" height="6.6" fill="#3b82f6"/><rect x="9.8" y="13.9" width="2.6" height="2.1" fill="#b8b8b8"/></svg></div>
<div class="tr" style="left:78px;top:160px;letter-spacing:0.100px">Breakpoint</div>
<div class="a" style="left:58px;top:176px;width:16px;height:16px"><svg width="16" height="16" viewBox="0 0 16 16" style="display:block;overflow:visible"><defs></defs><rect x="0.5" y="0.9" width="13.2" height="11.8" fill="#f1f1f1" stroke="#2f5fdc" stroke-width="0.9"/><rect x="0.2" y="0.4" width="13.8" height="2.2" fill="#2f5fdc"/><text x="6.6" y="9.6" font-family="Liberation Sans" font-weight="bold" font-size="7" text-anchor="middle" fill="#111" letter-spacing="-0.4">&lt;/&gt;</text><rect x="6.7" y="7.3" width="9.2" height="6.6" fill="#3b82f6"/><rect x="9.8" y="13.9" width="2.6" height="2.1" fill="#b8b8b8"/></svg></div>
<div class="tr" style="left:78px;top:176px;letter-spacing:0.126px">CheckArbitrage</div>
<div class="a" style="left:58px;top:192px;width:16px;height:16px"><svg width="16" height="16" viewBox="0 0 16 16" style="display:block;overflow:visible"><defs></defs><rect x="0.5" y="0.9" width="13.2" height="11.8" fill="#f1f1f1" stroke="#2f5fdc" stroke-width="0.9"/><rect x="0.2" y="0.4" width="13.8" height="2.2" fill="#2f5fdc"/><text x="6.6" y="9.6" font-family="Liberation Sans" font-weight="bold" font-size="7" text-anchor="middle" fill="#111" letter-spacing="-0.4">&lt;/&gt;</text><rect x="6.7" y="7.3" width="9.2" height="6.6" fill="#3b82f6"/><rect x="9.8" y="13.9" width="2.6" height="2.1" fill="#b8b8b8"/></svg></div>
<div class="tr" style="left:78px;top:192px;letter-spacing:0.127px">Client Market Order</div>
<div class="a" style="left:58px;top:208px;width:16px;height:16px"><svg width="16" height="16" viewBox="0 0 16 16" style="display:block;overflow:visible"><defs></defs><rect x="0.5" y="0.9" width="13.2" height="11.8" fill="#f1f1f1" stroke="#2f5fdc" stroke-width="0.9"/><rect x="0.2" y="0.4" width="13.8" height="2.2" fill="#2f5fdc"/><text x="6.6" y="9.6" font-family="Liberation Sans" font-weight="bold" font-size="7" text-anchor="middle" fill="#111" letter-spacing="-0.4">&lt;/&gt;</text><rect x="6.7" y="7.3" width="9.2" height="6.6" fill="#3b82f6"/><rect x="9.8" y="13.9" width="2.6" height="2.1" fill="#b8b8b8"/></svg></div>
<div class="tr" style="left:78px;top:208px;letter-spacing:-0.030px">cm_EA_News (1)</div>
<div class="a" style="left:58px;top:224px;width:16px;height:16px"><svg width="16" height="16" viewBox="0 0 16 16" style="display:block;overflow:visible"><defs></defs><rect x="0.5" y="0.9" width="13.2" height="11.8" fill="#f1f1f1" stroke="#2f5fdc" stroke-width="0.9"/><rect x="0.2" y="0.4" width="13.8" height="2.2" fill="#2f5fdc"/><text x="6.6" y="9.6" font-family="Liberation Sans" font-weight="bold" font-size="7" text-anchor="middle" fill="#111" letter-spacing="-0.4">&lt;/&gt;</text><rect x="6.7" y="7.3" width="9.2" height="6.6" fill="#3b82f6"/><rect x="9.8" y="13.9" width="2.6" height="2.1" fill="#b8b8b8"/></svg></div>
<div class="tr" style="left:78px;top:224px;letter-spacing:0.161px">CustomIndicator</div>
<div class="a" style="left:58px;top:240px;width:16px;height:16px"><svg width="16" height="16" viewBox="0 0 16 16" style="display:block;overflow:visible"><defs></defs><rect x="0.5" y="0.9" width="13.2" height="11.8" fill="#f1f1f1" stroke="#2f5fdc" stroke-width="0.9"/><rect x="0.2" y="0.4" width="13.8" height="2.2" fill="#2f5fdc"/><text x="6.6" y="9.6" font-family="Liberation Sans" font-weight="bold" font-size="7" text-anchor="middle" fill="#111" letter-spacing="-0.4">&lt;/&gt;</text><rect x="6.7" y="7.3" width="9.2" height="6.6" fill="#3b82f6"/><rect x="9.8" y="13.9" width="2.6" height="2.1" fill="#b8b8b8"/></svg></div>
<div class="tr" style="left:78px;top:240px;letter-spacing:0.273px">forex_Fraus_for_m1s</div>
<div class="a" style="left:58px;top:256px;width:16px;height:16px"><svg width="16" height="16" viewBox="0 0 16 16" style="display:block;overflow:visible"><defs></defs><rect x="0.5" y="0.9" width="13.2" height="11.8" fill="#f1f1f1" stroke="#2f5fdc" stroke-width="0.9"/><rect x="0.2" y="0.4" width="13.8" height="2.2" fill="#2f5fdc"/><text x="6.6" y="9.6" font-family="Liberation Sans" font-weight="bold" font-size="7" text-anchor="middle" fill="#111" letter-spacing="-0.4">&lt;/&gt;</text><rect x="6.7" y="7.3" width="9.2" height="6.6" fill="#3b82f6"/><rect x="9.8" y="13.9" width="2.6" height="2.1" fill="#b8b8b8"/></svg></div>
<div class="tr" style="left:78px;top:256px;letter-spacing:0.152px">Heat_Map_Multicolor_ot</div>
<div class="a" style="left:58px;top:272px;width:16px;height:16px"><svg width="16" height="16" viewBox="0 0 16 16" style="display:block;overflow:visible"><defs></defs><rect x="0.5" y="0.9" width="13.2" height="11.8" fill="#f1f1f1" stroke="#2f5fdc" stroke-width="0.9"/><rect x="0.2" y="0.4" width="13.8" height="2.2" fill="#2f5fdc"/><text x="6.6" y="9.6" font-family="Liberation Sans" font-weight="bold" font-size="7" text-anchor="middle" fill="#111" letter-spacing="-0.4">&lt;/&gt;</text><rect x="6.7" y="7.3" width="9.2" height="6.6" fill="#3b82f6"/><rect x="9.8" y="13.9" width="2.6" height="2.1" fill="#b8b8b8"/></svg></div>
<div class="tr" style="left:78px;top:272px;letter-spacing:0.218px">i-Regr (3)</div>
<div class="a" style="left:58px;top:288px;width:16px;height:16px"><svg width="16" height="16" viewBox="0 0 16 16" style="display:block;overflow:visible"><defs></defs><rect x="0.5" y="0.9" width="13.2" height="11.8" fill="#f1f1f1" stroke="#2f5fdc" stroke-width="0.9"/><rect x="0.2" y="0.4" width="13.8" height="2.2" fill="#2f5fdc"/><text x="6.6" y="9.6" font-family="Liberation Sans" font-weight="bold" font-size="7" text-anchor="middle" fill="#111" letter-spacing="-0.4">&lt;/&gt;</text><rect x="6.7" y="7.3" width="9.2" height="6.6" fill="#3b82f6"/><rect x="9.8" y="13.9" width="2.6" height="2.1" fill="#b8b8b8"/></svg></div>
<div class="tr" style="left:78px;top:288px;letter-spacing:-0.202px">KRI</div>
<div class="a" style="left:58px;top:304px;width:16px;height:16px"><svg width="16" height="16" viewBox="0 0 16 16" style="display:block;overflow:visible"><defs></defs><rect x="0.5" y="0.9" width="13.2" height="11.8" fill="#f1f1f1" stroke="#2f5fdc" stroke-width="0.9"/><rect x="0.2" y="0.4" width="13.8" height="2.2" fill="#2f5fdc"/><text x="6.6" y="9.6" font-family="Liberation Sans" font-weight="bold" font-size="7" text-anchor="middle" fill="#111" letter-spacing="-0.4">&lt;/&gt;</text><rect x="6.7" y="7.3" width="9.2" height="6.6" fill="#3b82f6"/><rect x="9.8" y="13.9" width="2.6" height="2.1" fill="#b8b8b8"/></svg></div>
<div class="tr" style="left:78px;top:304px;letter-spacing:-0.305px">LossLessMa</div>
<div class="a" style="left:58px;top:320px;width:16px;height:16px"><svg width="16" height="16" viewBox="0 0 16 16" style="display:block;overflow:visible"><defs></defs><rect x="0.5" y="0.9" width="13.2" height="11.8" fill="#f1f1f1" stroke="#2f5fdc" stroke-width="0.9"/><rect x="0.2" y="0.4" width="13.8" height="2.2" fill="#2f5fdc"/><text x="6.6" y="9.6" font-family="Liberation Sans" font-weight="bold" font-size="7" text-anchor="middle" fill="#111" letter-spacing="-0.4">&lt;/&gt;</text><rect x="6.7" y="7.3" width="9.2" height="6.6" fill="#3b82f6"/><rect x="9.8" y="13.9" width="2.6" height="2.1" fill="#b8b8b8"/></svg></div>
<div class="tr" style="left:78px;top:320px;letter-spacing:0.025px">MA2CCI</div>
<div class="a" style="left:218px;top:0;width:16px;height:330px;background:#f1f1f4;border-left:1px solid #e2e2e8"></div>
<div class="a" style="left:220px;top:16px;width:12px;height:195px;border:1px solid #9a9ca8;border-radius:2px;background:linear-gradient(90deg,#f6f6f8,#d8d9de 60%,#c6c7ce)"></div>
<svg class="a" style="left:222px;top:109px" width="10" height="10" viewBox="0 0 10 10"><path d="M0 2.5h8M0 4.5h8M0 6.5h8" stroke="#70727e" stroke-width="1" shape-rendering="crispEdges"/></svg>
<svg class="a" style="left:221px;top:5px" width="10" height="6"><polygon points="0,5.5 9,5.5 4.5,0.5" fill="#55575f"/></svg>
<svg class="a" style="left:221px;top:316px" width="10" height="6"><polygon points="0,0.5 9,0.5 4.5,5.5" fill="#55575f"/></svg>
</div>
<div class="a" style="left:842px;top:331px;width:123px;height:37px;border:5px solid #e81c24;border-top-width:4px"></div>
<div class="a" style="left:795px;top:527px;width:241px;height:22px;background:linear-gradient(#fbfbfd,#ececf3)"></div>
<svg class="a" style="left:795px;top:526px" width="241" height="22" viewBox="795 526 241 22"><path d="M801 526.5 L808 541 Q810 545.5 814 545.5 L863 545.5 Q867 545.5 869 541 L876 526.5" fill="#fafbfd" stroke="#aeb0bd"/><path d="M876 526.5 L869.5 540 M869 541.5 Q871 545.5 875 545.5 L939 545.5 Q943 545.5 945 541 L952 526.5" fill="none" stroke="#aeb0bd"/></svg>
<div class="a" style="left:811px;top:529px;font-size:11.77px;font-weight:bold;line-height:14px;color:#111;white-space:nowrap">Navigator</div>
<div class="a" style="left:877px;top:529px;font-size:10.73px;line-height:14px;color:#111;white-space:nowrap">Data Window</div>
<div class="a" style="left:8px;top:549px;width:1028px;height:4px;background:linear-gradient(#b4b7c1,#a6a9b4)"></div>
<div class="a" style="left:8px;top:553px;width:1028px;height:162px;background:#eef0f5"></div>
<div class="a" style="left:8px;top:553px;width:23px;height:162px;background:linear-gradient(90deg,#f4f5f9,#e2e5ec);border-right:1px solid #d0d3dc"></div>
<div class="a" style="left:27px;top:559.5px;font-size:12.18px;line-height:14px;color:#2f4a9a;white-space:nowrap;transform-origin:0 0;transform:rotate(90deg)">Trade (1/1)</div>
<svg class="a" style="left:15px;top:680px" width="9" height="26" viewBox="15 680 9 26"><path d="M17.6 681.6 H21 V685.6 H17.6 Z" fill="none" stroke="#1c3c90" stroke-width="1.1"/><rect x="20" y="681.4" width="1.1" height="4.6" fill="#1c3c90"/><rect x="16" y="685.6" width="7" height="1.2" fill="#1c3c90"/><rect x="19" y="686.6" width="1.1" height="3.4" fill="#1c3c90"/><path d="M15.6 698.2 L22.4 704.6 M22.4 698.2 L15.6 704.6" stroke="#1c3c90" stroke-width="1.7"/></svg>
<div class="a" style="left:31px;top:554px;width:1001px;height:19px;background:#f5fcff;border:1px solid #1c1c1c"></div>
<div class="a" style="left:40px;top:558px;font-size:11.83px;font-weight:bold;line-height:14px;color:#c00000;white-space:pre">Balance: 49,842.20  Flt P/L: 9.10  Assets Value: 11,252.60  Equity: 49,851.30  Used Margin: 100.00  Free Margin: 49,751.30  Margin Level: 49,851.30%</div>
<div class="a" style="left:38px;top:579px;width:13px;height:13px;background:linear-gradient(135deg,#dcdfe6,#f8f8fa);border:1px solid #8e8f98;box-shadow:inset 0 0 0 1px #f4f4f6"></div>
<div class="bt" style="left:57.5px;top:580px;font-size:10.37px">Close Selected Positions</div>
<div class="bt" style="left:206px;top:580px;font-size:12px;color:#111;font-style:italic">/</div>
<div class="bt" style="left:243px;top:580px;font-size:10.37px"><span style="letter-spacing:0.072px;margin-right:-0.072px">Hedge Selected Positions</span></div>
<div class="a" style="left:397px;top:579px;width:13px;height:13px;background:linear-gradient(135deg,#dcdfe6,#f8f8fa);border:1px solid #8e8f98;box-shadow:inset 0 0 0 1px #f4f4f6"></div><svg class="a" style="left:397px;top:579px" width="13" height="13" viewBox="0 0 13 13"><path d="M3 6.2 L5.4 9 L10 3.6" fill="none" stroke="#3a4f9c" stroke-width="1.9"/></svg>
<div class="bt" style="left:417.5px;top:581px;font-size:12px;color:#4aaed6;text-decoration:underline"><span style="letter-spacing:0.334px;margin-right:-0.334px">Cancel Selected Orders</span></div>
<div class="a" style="left:32px;top:599px;width:999px;height:92px;background:#fff;border:1px solid #b8bbc6"></div>
<div class="a" style="left:33px;top:600px;width:997px;height:20px;background:linear-gradient(#fafafc 0,#eceef3 45%,#dfe2e9 55%,#e9ebf0 100%);border-bottom:1px solid #8b8d9a"></div>
<div class="a" style="left:174px;top:603px;width:1px;height:14px;background:#7e8092"></div>
<div class="a" style="left:244px;top:603px;width:1px;height:14px;background:#7e8092"></div>
<div class="a" style="left:344px;top:603px;width:1px;height:14px;background:#7e8092"></div>
<div class="a" style="left:398px;top:603px;width:1px;height:14px;background:#7e8092"></div>
<div class="a" style="left:460px;top:603px;width:1px;height:14px;background:#7e8092"></div>
<div class="a" style="left:532px;top:603px;width:1px;height:14px;background:#7e8092"></div>
<div class="a" style="left:604px;top:603px;width:1px;height:14px;background:#7e8092"></div>
<div class="a" style="left:662px;top:603px;width:1px;height:14px;background:#7e8092"></div>
<div class="a" style="left:736px;top:603px;width:1px;height:14px;background:#7e8092"></div>
<div class="a" style="left:780px;top:603px;width:1px;height:14px;background:#7e8092"></div>
<div class="a" style="left:834px;top:603px;width:1px;height:14px;background:#7e8092"></div>
<div class="a" style="left:900px;top:603px;width:1px;height:14px;background:#7e8092"></div>
<div class="a" style="left:996px;top:603px;width:1px;height:14px;background:#7e8092"></div>
<div class="bt" style="left:39px;top:603px;color:#111"><span style="letter-spacing:0.172px;margin-right:-0.172px">Ticket</span></div>
<div class="bt" style="left:180.5px;top:603px;color:#111"><span style="letter-spacing:0.686px;margin-right:-0.686px">Dat...</span></div>
<div class="bt" style="left:294px;transform:translateX(-50%);top:603px;color:#111"><span style="letter-spacing:-0.099px;margin-right:0.099px">Type</span></div>
<div class="bt" style="left:351px;top:603px;color:#111"><span style="letter-spacing:0.085px;margin-right:-0.085px">Amount</span></div>
<div class="bt" style="left:403.5px;top:603px;color:#111"><span style="letter-spacing:-0.176px;margin-right:0.176px">Symbol</span></div>
<div class="bt" style="left:467px;top:603px;color:#111"><span style="letter-spacing:-0.214px;margin-right:0.214px">Open Price</span></div>
<div class="bt" style="left:539px;top:603px;color:#111"><span style="letter-spacing:0.416px;margin-right:-0.416px">Current P...</span></div>
<div class="bt" style="left:609.5px;top:603px;color:#111"><span style="letter-spacing:-0.280px;margin-right:0.280px">S/L</span></div>
<div class="bt" style="left:669px;top:603px;color:#111"><span style="letter-spacing:-0.373px;margin-right:0.373px">T/P</span></div>
<div class="bt" style="left:742.5px;top:603px;color:#111"><span style="letter-spacing:-0.735px;margin-right:0.735px">Comm</span></div>
<div class="bt" style="left:786.5px;top:603px;color:#111"><span style="letter-spacing:0.588px;margin-right:-0.588px">Interest</span></div>
<div class="bt" style="right:145px;top:603px;color:#111"><span style="letter-spacing:-0.280px;margin-right:0.280px">P/L</span></div>
<div class="bt" style="right:49px;top:603px;color:#111"><span style="letter-spacing:-0.143px;margin-right:0.143px">Value</span></div>
<div class="bt" style="left:1002.5px;top:603px;color:#111"><span style="letter-spacing:-0.735px;margin-right:0.735px">Comm</span></div>
<div class="a" style="left:67px;top:621px;width:963px;height:17px;background:#e9effb"></div>
<div class="a" style="left:67px;top:656px;width:963px;height:16px;background:#e9effb"></div>
<div class="a" style="left:67px;top:639px;width:108px;height:16px;background:#c0c0c0"></div>
<div class="a" style="left:176px;top:639px;width:69px;height:16px;background:#c0c0c0"></div>
<div class="a" style="left:246px;top:639px;width:99px;height:16px;background:#c0c0c0"></div>
<div class="a" style="left:346px;top:639px;width:52px;height:16px;background:#c0c0c0"></div>
<div class="a" style="left:399px;top:639px;width:62px;height:16px;background:#c0c0c0"></div>
<div class="a" style="left:462px;top:639px;width:71px;height:16px;background:#c0c0c0"></div>
<div class="a" style="left:534px;top:639px;width:70px;height:16px;background:#c0c0c0"></div>
<div class="a" style="left:605px;top:639px;width:58px;height:16px;background:#c0c0c0"></div>
<div class="a" style="left:664px;top:639px;width:72px;height:16px;background:#c0c0c0"></div>
<div class="a" style="left:737px;top:639px;width:44px;height:16px;background:#c0c0c0"></div>
<div class="a" style="left:782px;top:639px;width:53px;height:16px;background:#c0c0c0"></div>
<div class="a" style="left:836px;top:639px;width:65px;height:16px;background:#c0c0c0"></div>
<div class="a" style="left:902px;top:639px;width:95px;height:16px;background:#c0c0c0"></div>
<div class="a" style="left:998px;top:639px;width:32px;height:16px;background:#c0c0c0"></div>
<div class="a" style="left:175px;top:621px;width:1px;height:17px;background:#f6f8fd"></div>
<div class="a" style="left:175px;top:656px;width:1px;height:16px;background:#f6f8fd"></div>
<div class="a" style="left:245px;top:621px;width:1px;height:17px;background:#f6f8fd"></div>
<div class="a" style="left:245px;top:656px;width:1px;height:16px;background:#f6f8fd"></div>
<div class="a" style="left:345px;top:621px;width:1px;height:17px;background:#f6f8fd"></div>
<div class="a" style="left:345px;top:656px;width:1px;height:16px;background:#f6f8fd"></div>
<div class="a" style="left:398px;top:621px;width:1px;height:17px;background:#f6f8fd"></div>
<div class="a" style="left:398px;top:656px;width:1px;height:16px;background:#f6f8fd"></div>
<div class="a" style="left:461px;top:621px;width:1px;height:17px;background:#f6f8fd"></div>
<div class="a" style="left:461px;top:656px;width:1px;height:16px;background:#f6f8fd"></div>
<div class="a" style="left:533px;top:621px;width:1px;height:17px;background:#f6f8fd"></div>
<div class="a" style="left:533px;top:656px;width:1px;height:16px;background:#f6f8fd"></div>
<div class="a" style="left:604px;top:621px;width:1px;height:17px;background:#f6f8fd"></div>
<div class="a" style="left:604px;top:656px;width:1px;height:16px;background:#f6f8fd"></div>
<div class="a" style="left:663px;top:621px;width:1px;height:17px;background:#f6f8fd"></div>
<div class="a" style="left:663px;top:656px;width:1px;height:16px;background:#f6f8fd"></div>
<div class="a" style="left:736px;top:621px;width:1px;height:17px;background:#f6f8fd"></div>
<div class="a" style="left:736px;top:656px;width:1px;height:16px;background:#f6f8fd"></div>
<div class="a" style="left:781px;top:621px;width:1px;height:17px;background:#f6f8fd"></div>
<div class="a" style="left:781px;top:656px;width:1px;height:16px;background:#f6f8fd"></div>
<div class="a" style="left:835px;top:621px;width:1px;height:17px;background:#f6f8fd"></div>
<div class="a" style="left:835px;top:656px;width:1px;height:16px;background:#f6f8fd"></div>
<div class="a" style="left:901px;top:621px;width:1px;height:17px;background:#f6f8fd"></div>
<div class="a" style="left:901px;top:656px;width:1px;height:16px;background:#f6f8fd"></div>
<div class="a" style="left:997px;top:621px;width:1px;height:17px;background:#f6f8fd"></div>
<div class="a" style="left:997px;top:656px;width:1px;height:16px;background:#f6f8fd"></div>
<div class="a" style="left:37px;top:624px;width:13px;height:13px;background:#fff;border:2px solid #6c6c6c"></div>
<div class="a" style="left:37px;top:640px;width:13px;height:13px;background:#fff;border:2px solid #6c6c6c"></div><svg class="a" style="left:37px;top:640px" width="13" height="13" viewBox="0 0 13 13"><path d="M3 6.2 L5.4 9 L10 3.6" fill="none" stroke="#000" stroke-width="1.9"/></svg>
<div class="a" style="left:37px;top:657px;width:13px;height:13px;background:#fff;border:2px solid #6c6c6c"></div><svg class="a" style="left:37px;top:657px" width="13" height="13" viewBox="0 0 13 13"><path d="M3 6.2 L5.4 9 L10 3.6" fill="none" stroke="#000" stroke-width="1.9"/></svg>
<div class="a" style="left:52px;top:623px;width:14px;height:14px;border-radius:7px;background:radial-gradient(circle at 40% 30%,#ffb199 0,#ff4a26 45%,#d92a0a 100%);border:1px solid #c43a1e"></div>
<svg class="a" style="left:51px;top:655px" width="17" height="17" viewBox="51 655 17 17"><circle cx="53.6" cy="658.4" r="2.2" fill="#f5b52a"/><circle cx="63.4" cy="658.4" r="2.2" fill="#f5b52a"/><path d="M52.6 668.6 l1.6 -2 M64.4 668.6 l-1.6 -2" stroke="#f5a020" stroke-width="1.4"/><circle cx="58.5" cy="663" r="6.3" fill="#7a6ad8" stroke="#5a48b8" stroke-width="0.6"/><circle cx="58.5" cy="663" r="4.2" fill="#f6ecc0"/><path d="M58.5 663 L56.6 661.2 M58.5 663 L60.8 663.4" stroke="#333" stroke-width="0.9" fill="none"/><rect x="60.4" y="664.4" width="6.6" height="6.6" fill="#4a9ae8" stroke="#1f6fd0" stroke-width="0.9"/><rect x="62" y="666" width="3.4" height="3.4" fill="#9ccaf6"/></svg>
<div class="bt" style="left:68.5px;top:624px;"><span style="letter-spacing:0.179px;margin-right:-0.179px">855737</span></div>
<div class="bt" style="left:181.5px;top:624px;"><span style="letter-spacing:0.365px;margin-right:-0.365px">2016-04-...</span></div>
<div class="bt" style="left:294.5px;transform:translateX(-50%);top:624px;"><span style="letter-spacing:-0.581px;margin-right:0.581px">Sell</span></div>
<div class="bt" style="left:351px;top:624px;"><span style="letter-spacing:0.381px;margin-right:-0.381px">0.100</span></div>
<div class="bt" style="left:403.5px;top:624px;"><span style="letter-spacing:-0.643px;margin-right:0.643px">EUR/USD</span></div>
<div class="bt" style="left:467.5px;top:624px;"><span style="letter-spacing:0.270px;margin-right:-0.270px">1.12617</span></div>
<div class="bt" style="left:539px;top:624px;color:#1a8a1a"><span style="letter-spacing:0.270px;margin-right:-0.270px">1.12526</span></div>
<div class="bt" style="left:609.5px;top:624px;"><span style="letter-spacing:0.270px;margin-right:-0.270px">1.12726</span></div>
<div class="bt" style="left:669px;top:624px;"><span style="letter-spacing:0.270px;margin-right:-0.270px">1.12324</span></div>
<div class="bt" style="right:262px;top:624px;"><span style="letter-spacing:0.558px;margin-right:-0.558px">0.00</span></div>
<div class="bt" style="right:208px;top:624px;"><span style="letter-spacing:0.558px;margin-right:-0.558px">0.00</span></div>
<div class="bt" style="right:142px;top:624px;"><span style="letter-spacing:0.458px;margin-right:-0.458px">9.10</span></div>
<div class="bt" style="right:46px;top:624px;"><span style="letter-spacing:0.312px;margin-right:-0.312px">11,252.60</span></div>
<div class="bt" style="left:68.5px;top:640.5px;"><span style="letter-spacing:0.035px;margin-right:-0.035px">Pending Orders:</span></div>
<div class="bt" style="right:141px;top:640px;font-weight:bold;font-size:11px;color:#10107a"><span style="letter-spacing:0.930px;margin-right:-0.930px">9.10</span></div>
<div class="bt" style="right:45px;top:640px;font-weight:bold;font-size:11px;color:#10107a"><span style="letter-spacing:0.884px;margin-right:-0.884px">11,252.60</span></div>
<div class="bt" style="left:68.5px;top:658px;"><span style="letter-spacing:0.179px;margin-right:-0.179px">623138</span></div>
<div class="bt" style="left:181.5px;top:658px;"><span style="letter-spacing:0.365px;margin-right:-0.365px">2016-04-...</span></div>
<div class="bt" style="left:294px;transform:translateX(-50%);top:658px;"><span style="letter-spacing:0.027px;margin-right:-0.027px">Buy (Manage)</span></div>
<div class="bt" style="left:351px;top:658px;"><span style="letter-spacing:0.381px;margin-right:-0.381px">0.100</span></div>
<div class="bt" style="left:403.5px;top:658px;"><span style="letter-spacing:-0.643px;margin-right:0.643px">EUR/USD</span></div>
<div class="bt" style="left:539px;top:658px;color:#1a8a1a"><span style="letter-spacing:0.270px;margin-right:-0.270px">1.12526</span></div>
<div class="bt" style="left:609.5px;top:658px;"><span style="letter-spacing:0.270px;margin-right:-0.270px">1.12726</span></div>
<div class="bt" style="left:669px;top:658px;"><span style="letter-spacing:0.270px;margin-right:-0.270px">1.12324</span></div>
<div class="a" style="left:33px;top:674px;width:997px;height:16px;background:#f1f1f4;border-top:1px solid #d5d6dc"></div>
<div class="a" style="left:50px;top:675px;width:927px;height:13px;border:1px solid #9a9ca8;border-radius:2px;background:linear-gradient(#f8f8fa,#dcdde2 55%,#c8c9d0)"></div>
<svg class="a" style="left:38px;top:676px" width="8" height="11"><polygon points="6.5,0.5 6.5,10.5 0.5,5.5" fill="#55575f"/></svg>
<svg class="a" style="left:1018px;top:676px" width="8" height="11"><polygon points="0.5,0.5 0.5,10.5 6.5,5.5" fill="#55575f"/></svg>
<svg class="a" style="left:509px;top:677px" width="8" height="9"><path d="M0.5 1v7M2.5 1v7M4.5 1v7M6.5 1v7" stroke="#70727e" stroke-width="1" shape-rendering="crispEdges"/></svg>
<div class="a" style="left:31px;top:691px;width:1001px;height:23px;background:linear-gradient(#f1f2f6,#f7f7fa)"></div>
<svg class="a" style="left:31px;top:690px" width="1005" height="24" viewBox="31 690 1005 24">
<path d="M36.5 691.5 L43.5 705 Q46.0 710.5 50.5 710.5 L111.5 710.5 Q116.0 710.5 118.5 705 L125.5 691.5" fill="#fbfbfd" stroke="#adafbc"/>
<path d="M121 705 Q123.5 710.5 128 710.5 L171 710.5 Q175.5 710.5 178 705 L185 691.5" fill="none" stroke="#adafbc"/>
<path d="M180.5 705 Q183.0 710.5 187.5 710.5 L240 710.5 Q244.5 710.5 247 705 L254 691.5" fill="none" stroke="#adafbc"/>
<path d="M250 705 Q252.5 710.5 257 710.5 L289 710.5 Q293.5 710.5 296 705 L303 691.5" fill="none" stroke="#adafbc"/>
<path d="M297 705 Q299.5 710.5 304 710.5 L399 710.5 Q403.5 710.5 406 705 L413 691.5" fill="none" stroke="#adafbc"/>
<path d="M408 705 Q410.5 710.5 415 710.5 L455.5 710.5 Q460.0 710.5 462.5 705 L469.5 691.5" fill="none" stroke="#adafbc"/>
<path d="M462.5 705 Q465.0 710.5 469.5 710.5 L493 710.5 Q497.5 710.5 500 705 L507 691.5" fill="none" stroke="#adafbc"/>
<path d="M502.5 705 Q505.0 710.5 509.5 710.5 L538 710.5 Q542.5 710.5 545 705 L552 691.5" fill="none" stroke="#adafbc"/>
</svg>
<div class="bt" style="left:48.5px;top:693.5px;color:#111;font-size:13px;font-weight:bold">Trade (1/1)</div>
<div class="bt" style="left:126px;top:694px;color:#111;font-size:10.7px"><span style="letter-spacing:0.114px;margin-right:-0.114px">Net Trade</span></div>
<div class="bt" style="left:185.5px;top:694px;color:#111;font-size:10.7px"><span style="letter-spacing:0.183px;margin-right:-0.183px">History (18)</span></div>
<div class="bt" style="left:255px;top:694px;color:#111;font-size:10.7px"><span style="letter-spacing:0.301px;margin-right:-0.301px">Journal</span></div>
<div class="bt" style="left:302px;top:694px;color:#111;font-size:10.7px"><span style="letter-spacing:-0.121px;margin-right:0.121px">Mailbox (OmSaiTech)</span></div>
<div class="bt" style="left:432px;top:694px;color:#111;font-size:10.7px"><span style="letter-spacing:-0.085px;margin-right:0.085px">News</span></div>
<div class="bt" style="left:467.5px;top:694px;color:#111;font-size:10.7px"><span style="letter-spacing:0.170px;margin-right:-0.170px">Alerts</span></div>
<div class="bt" style="left:507.5px;top:694px;color:#111;font-size:10.7px"><span style="letter-spacing:0.475px;margin-right:-0.475px">vStore</span></div>
<svg class="a" style="left:412px;top:695px" width="18" height="11" viewBox="0 0 18 11"><text x="9" y="8.4" font-family="Liberation Sans" font-weight="bold" font-size="8" text-anchor="middle" fill="#fff7e6" stroke="#ff9a1a" stroke-width="0.9" letter-spacing="-0.2">NEW</text></svg>
<div class="a" style="left:8px;top:712px;width:1024px;height:2px;background:#f4f4f8"></div>
<div class="a" style="left:8px;top:714px;width:1024px;height:22px;background:linear-gradient(#d9dce4 0,#cbced8 25%,#aeb2be 48%,#aaaeba 56%,#c9ccd5 100%);border-top:1px solid #c0c3cd"></div>
<div class="ssep" style="left:154px"></div><div class="ssep" style="left:155px;background:#f2f3f7"></div>
<div class="ssep" style="left:266px"></div><div class="ssep" style="left:267px;background:#f2f3f7"></div>
<div class="ssep" style="left:338px"></div><div class="ssep" style="left:339px;background:#f2f3f7"></div>
<div class="ssep" style="left:410px"></div><div class="ssep" style="left:411px;background:#f2f3f7"></div>
<div class="ssep" style="left:483px"></div><div class="ssep" style="left:484px;background:#f2f3f7"></div>
<div class="ssep" style="left:557px"></div><div class="ssep" style="left:558px;background:#f2f3f7"></div>
<div class="ssep" style="left:628px"></div><div class="ssep" style="left:629px;background:#f2f3f7"></div>
<div class="ssep" style="left:694px"></div><div class="ssep" style="left:695px;background:#f2f3f7"></div>
<div class="ssep" style="left:808px"></div><div class="ssep" style="left:809px;background:#f2f3f7"></div>
<div class="ssep" style="left:840px"></div><div class="ssep" style="left:841px;background:#f2f3f7"></div>
<div class="ssep" style="left:932px"></div><div class="ssep" style="left:933px;background:#f2f3f7"></div>
<div class="st" style="left:159.5px"><span style="letter-spacing:0.054px;margin-right:-0.054px">15/04/2016 02:00:00</span></div>
<div class="st" style="left:276.5px"><span style="letter-spacing:-0.037px;margin-right:0.037px">O: 1.12656</span></div>
<div class="st" style="left:348px"><span style="letter-spacing:-0.024px;margin-right:0.024px">H: 1.12686</span></div>
<div class="st" style="left:421.5px"><span style="letter-spacing:-0.099px;margin-right:0.099px">L: 1.12620</span></div>
<div class="st" style="left:495.5px"><span style="letter-spacing:-0.202px;margin-right:0.202px">C: 1.12649</span></div>
<div class="st" style="left:639.5px"><span style="letter-spacing:0.009px;margin-right:-0.009px">0:00GMT</span></div>
<div class="st" style="left:700.5px"><span style="letter-spacing:0.015px;margin-right:-0.015px">15/04/2016 07:15:23</span></div>
<div class="st" style="left:855px"><span style="letter-spacing:-0.100px;margin-right:0.100px">7043 / 12 KB</span></div>
<div class="st" style="left:962px"><span style="letter-spacing:0.249px;margin-right:-0.249px">Connected</span></div>
<svg class="a" style="left:941px;top:716px" width="18" height="18" viewBox="0 0 18 18"><g transform="rotate(-40 9 9)"><rect x="-1.5" y="8" width="5" height="2" fill="#5c8a1c"/><rect x="14.5" y="8" width="5" height="2" fill="#5c8a1c"/><rect x="3" y="5.2" width="5.4" height="7.6" rx="1.6" fill="#8cbc3c" stroke="#5c8a1c" stroke-width="0.7"/><rect x="9.6" y="5.2" width="5.4" height="7.6" rx="1.6" fill="#7cac2c" stroke="#5c8a1c" stroke-width="0.7"/><rect x="8" y="6.6" width="2" height="1.4" fill="#5c8a1c"/><rect x="8" y="10" width="2" height="1.4" fill="#5c8a1c"/></g></svg>
<div class="a" style="left:8px;top:736px;width:1024px;height:4px;background:#8a9ab6;border-top:1px solid #1e2028"></div>
<div class="a" style="left:8px;top:737px;width:60px;height:3px;background:#5f7fae;border-left:1px solid #4a4e5c;border-right:1px solid #4a4e5c"></div>
<div class="a" style="left:68px;top:737px;width:120px;height:3px;background:#e4e7ee;border-left:1px solid #4a4e5c;border-right:1px solid #4a4e5c"></div>
<div class="a" style="left:188px;top:737px;width:56px;height:3px;background:#7d96bb;border-left:1px solid #4a4e5c;border-right:1px solid #4a4e5c"></div>
<div class="a" style="left:245px;top:737px;width:121px;height:3px;background:#e4e7ee;border-left:1px solid #4a4e5c;border-right:1px solid #4a4e5c"></div>
<div class="a" style="left:369px;top:737px;width:60px;height:3px;background:#e4e7ee;border-left:1px solid #4a4e5c;border-right:1px solid #4a4e5c"></div>
<div class="a" style="left:432px;top:737px;width:118px;height:3px;background:#e4e7ee;border-left:1px solid #4a4e5c;border-right:1px solid #4a4e5c"></div>
<div class="a" style="left:554px;top:737px;width:60px;height:3px;background:#e4e7ee;border-left:1px solid #4a4e5c;border-right:1px solid #4a4e5c"></div>
<div class="a" style="left:616px;top:737px;width:60px;height:3px;background:#e4e7ee;border-left:1px solid #4a4e5c;border-right:1px solid #4a4e5c"></div>
<div class="a" style="left:678px;top:737px;width:59px;height:3px;background:#e4e7ee;border-left:1px solid #4a4e5c;border-right:1px solid #4a4e5c"></div>
<div class="a" style="left:737px;top:737px;width:32px;height:3px;background:#9ae49a;border-left:1px solid #4a4e5c;border-right:1px solid #4a4e5c"></div>
<div class="a" style="left:769px;top:737px;width:28px;height:3px;background:#e4e7ee;border-left:1px solid #4a4e5c;border-right:1px solid #4a4e5c"></div>
<div class="a" style="left:801px;top:737px;width:59px;height:3px;background:#cfd4de;border-left:1px solid #4a4e5c;border-right:1px solid #4a4e5c"></div>
<div class="a" style="left:1032px;top:0;width:4px;height:740px;background:#ececf4"></div>
</div>
</body>
</html>
